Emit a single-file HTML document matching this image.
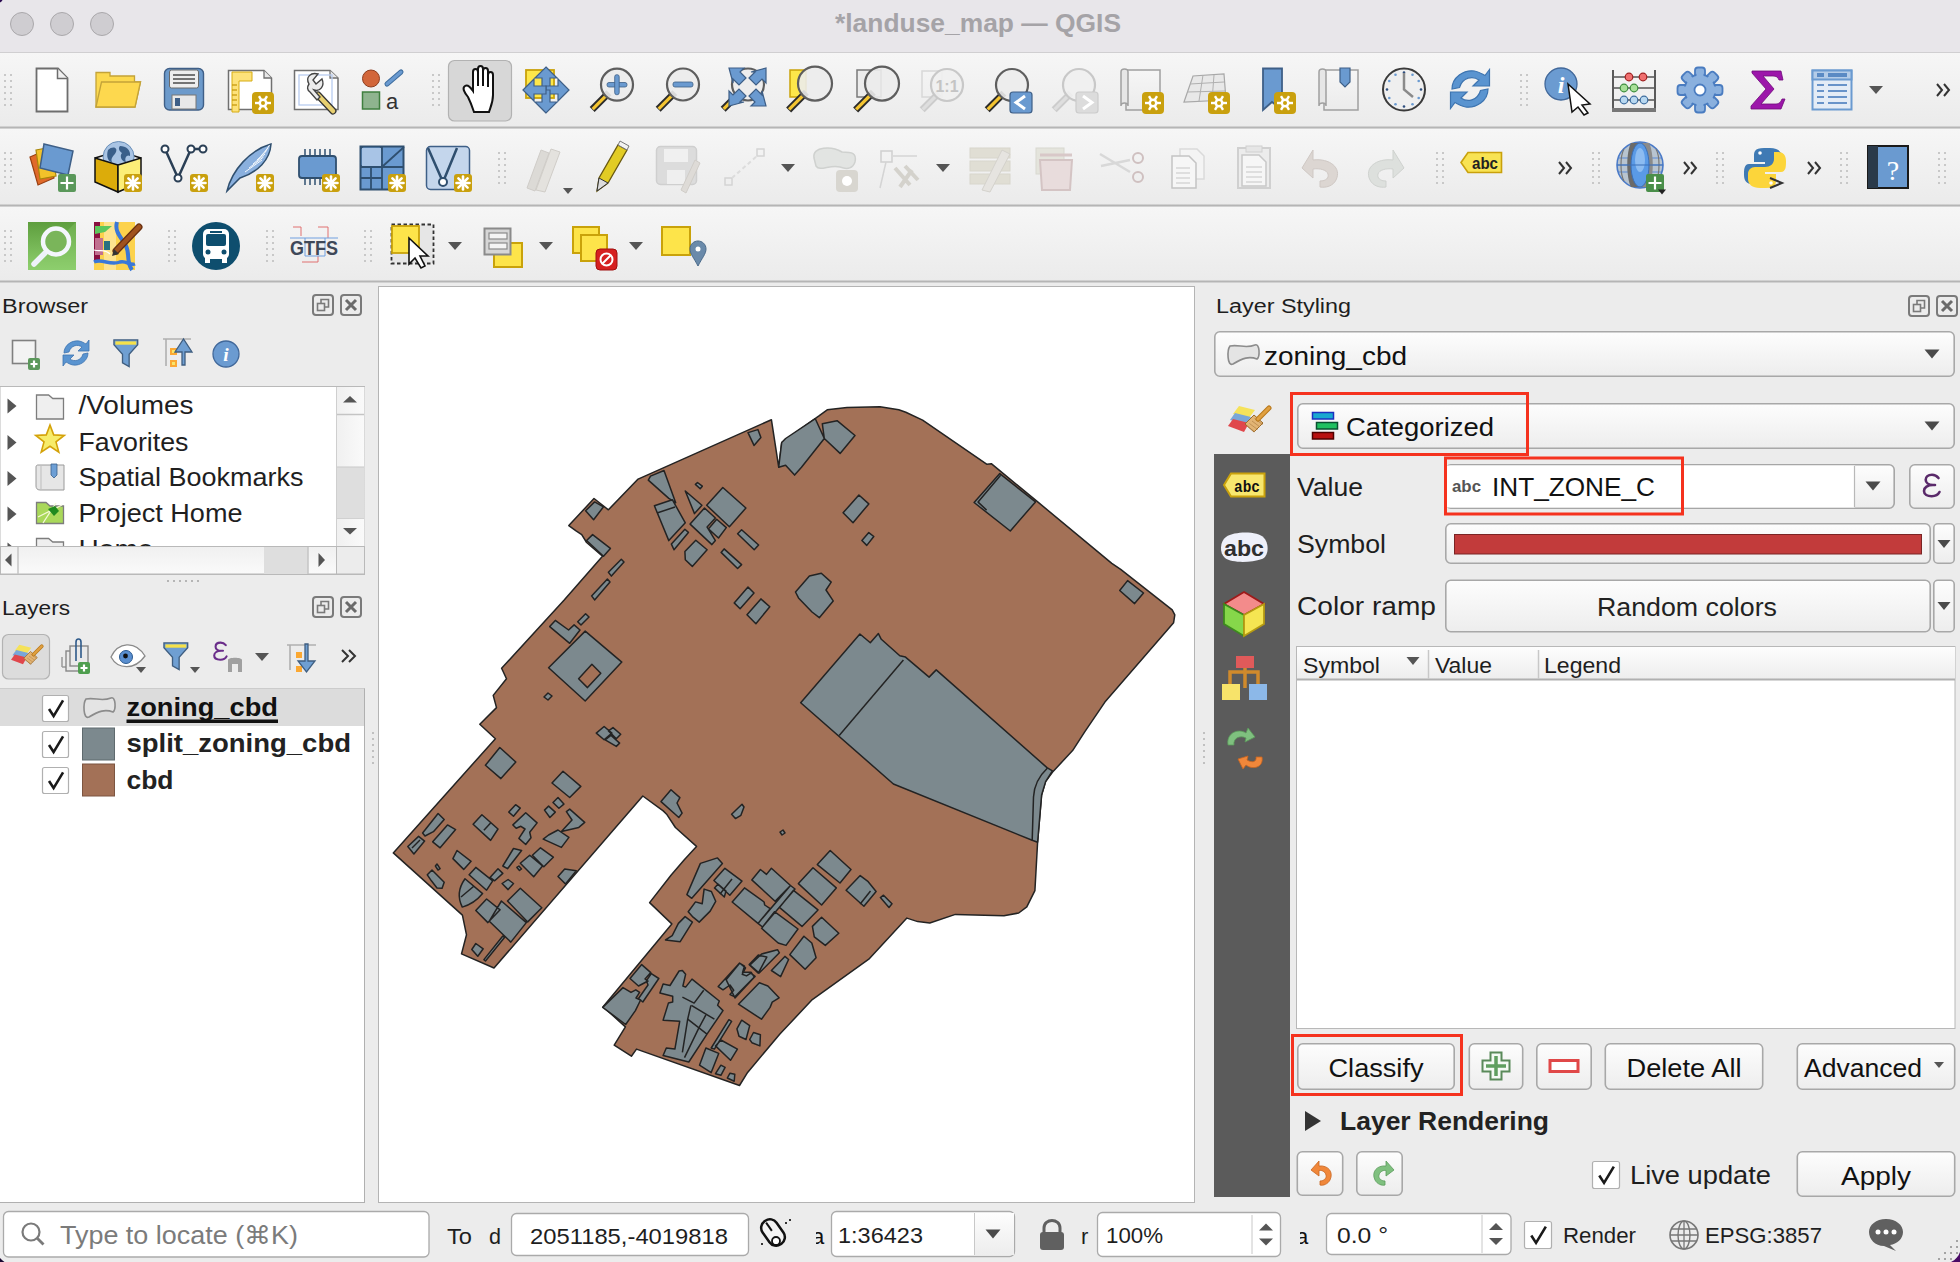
<!DOCTYPE html><html><head><meta charset="utf-8"><style>html,body{margin:0;padding:0;width:1960px;height:1262px;overflow:hidden;background:#ececec;font-family:"Liberation Sans",sans-serif}svg{display:block}</style></head><body>
<svg width="1960" height="1262" viewBox="0 0 1960 1262" style="position:absolute;left:0;top:0">
<defs>
<linearGradient id="tb" x1="0" y1="0" x2="0" y2="1"><stop offset="0" stop-color="#f6f6f6"/><stop offset="1" stop-color="#ebebeb"/></linearGradient>
<linearGradient id="btn" x1="0" y1="0" x2="0" y2="1"><stop offset="0" stop-color="#fdfdfd"/><stop offset="1" stop-color="#ededed"/></linearGradient>
<linearGradient id="sb" x1="0" y1="0" x2="1" y2="0"><stop offset="0" stop-color="#f0f0f0"/><stop offset="1" stop-color="#fafafa"/></linearGradient>
<linearGradient id="sbh" x1="0" y1="0" x2="0" y2="1"><stop offset="0" stop-color="#f0f0f0"/><stop offset="1" stop-color="#fafafa"/></linearGradient>
</defs>
<rect x="0" y="0" width="1960" height="1262" rx="0" fill="#ececec" />
<rect x="0" y="0" width="1960" height="52" rx="0" fill="#e8e6ea" />
<line x1="0" y1="52.5" x2="1960" y2="52.5" stroke="#d0cfd1" stroke-width="1" />
<circle cx="22" cy="24" r="11.5" fill="#cfcdd1" stroke="#aaa8ab" stroke-width="1"/>
<circle cx="62" cy="24" r="11.5" fill="#cfcdd1" stroke="#aaa8ab" stroke-width="1"/>
<circle cx="102" cy="24" r="11.5" fill="#cfcdd1" stroke="#aaa8ab" stroke-width="1"/>
<text x="978" y="32" font-family="Liberation Sans" font-size="26" font-weight="bold" fill="#a5a3a7" text-anchor="middle" textLength="286" lengthAdjust="spacingAndGlyphs" >*landuse_map — QGIS</text>
<rect x="0" y="53" width="1960" height="74" rx="0" fill="url(#tb)" />
<rect x="0" y="129" width="1960" height="76" rx="0" fill="url(#tb)" />
<rect x="0" y="207" width="1960" height="74" rx="0" fill="url(#tb)" />
<line x1="0" y1="127.5" x2="1960" y2="127.5" stroke="#b5b5b5" stroke-width="2" />
<line x1="0" y1="205.5" x2="1960" y2="205.5" stroke="#b5b5b5" stroke-width="2" />
<line x1="0" y1="281.5" x2="1960" y2="281.5" stroke="#b5b5b5" stroke-width="2" />
<rect x="378.5" y="286.5" width="816" height="916" rx="0" fill="#ffffff" stroke="#b4b4b4" stroke-width="1" />
<g>
<g stroke="#232323" stroke-width="1.5" stroke-linejoin="round">
<path fill="#a37157" d="M880.0 406.8 L898.8 409.8 L905.8 412.2 L922.6 420.1 L987.0 464.3 L991.3 463.7 L1036.5 500.9 L1111.8 563.3 L1120.7 569.3 L1172.2 609.9 L1174.8 614.8 L1173.6 622.7 L1104.9 702.1 L1084.7 731.8 L1072.6 750.6 L1052.4 772.2 L1045.6 781.6 L1041.6 795.0 L1037.6 842.2 L1034.9 890.7 L1026.8 906.8 L1018.7 913.0 L1003.9 915.7 L955.4 914.4 L929.8 923.0 L917.7 921.6 L906.9 918.1 L868.8 959.2 L812.3 999.6 L779.9 1034.0 L747.6 1072.4 L739.5 1085.5 L636.5 1049.1 L631.4 1056.2 L614.2 1045.1 L625.4 1026.9 L603.1 1006.7 L671.8 923.9 L649.6 902.6 L671.0 875.2 L684.3 859.7 L696.5 846.4 L675.4 827.5 L666.6 814.2 L663.2 810.9 L642.8 796.0 L494.0 968.0 L461.5 953.9 L466.5 934.8 L462.4 915.1 L393.3 852.9 L495.4 738.7 L479.8 724.3 L496.5 707.6 L493.2 695.4 L506.5 678.8 L501.6 668.3 L564.2 600.0 L602.5 556.3 L586.6 542.5 L581.7 534.6 L575.7 530.6 L568.8 525.6 L594.0 498.5 L608.4 509.8 L638.1 479.1 L771.4 419.7 L778.7 467.2 L781.7 442.5 L819.3 415.7 L827.2 409.8 L847.0 407.4Z"/>
<path fill="#7c898e" d="M800.7 702.7 L859.9 634.0 L870.3 642.8 L878.4 633.6 L881.3 639.3 L899.8 655.7 L905.5 657.1 L929.1 677.1 L936.2 669.9 L1047.0 767.6 L1052.4 770.8 L1045.6 781.6 L1041.6 795.0 L1037.6 842.2 L1032.2 840.3 L893.4 784.0ZM999.8 473.6 L1035.5 501.9 L1010.3 531.0 L974.1 502.5ZM1127.6 580.6 L1143.5 593.0 L1134.6 603.6 L1119.7 590.5ZM778.7 467.2 L781.7 442.5 L785.6 438.5 L815.3 418.7 L824.3 438.5 L801.5 467.2 L794.6 475.1 L785.6 465.2ZM822.3 423.7 L837.1 420.7 L855.0 435.5 L840.1 453.4 L824.3 438.5ZM748.0 432.6 L757.9 429.6 L760.9 437.5 L754.0 445.4ZM648.3 480.1 L650.5 476.1 L664.0 470.5 L675.7 502.7 L668.8 498.4ZM654.4 505.8 L672.3 499.7 L685.3 522.8 L668.8 540.6ZM685.3 491.0 L701.9 505.3 L694.5 513.6ZM695.4 484.4 L697.5 482.5 L702.3 486.2 L700.2 488.8ZM706.7 505.3 L722.8 487.5 L745.9 508.0 L729.4 526.7ZM690.1 524.1 L704.5 508.0 L715.4 518.0 L707.1 527.1 L715.4 540.6 L711.9 544.6ZM708.4 528.9 L716.7 519.3 L726.3 527.6 L718.5 538.0ZM671.4 544.1 L684.9 529.3 L688.4 532.4 L674.0 549.8ZM684.9 551.5 L695.8 540.2 L707.1 549.8 L692.3 566.4 L685.3 559.8ZM737.6 533.7 L741.6 529.7 L758.6 545.0 L754.2 549.8ZM721.1 552.4 L724.1 548.9 L741.6 564.6 L737.6 568.5ZM843.1 512.8 L858.9 495.0 L868.8 503.9 L853.0 522.7ZM861.9 540.5 L868.8 532.6 L873.8 536.5 L866.8 545.4ZM795.5 592.0 L809.4 576.1 L821.3 573.2 L831.2 582.1 L826.0 590.0 L833.2 600.9 L819.3 617.7 L812.0 612.0 L798.5 597.9ZM734.2 602.9 L748.0 587.0 L754.0 593.0 L740.1 608.8ZM747.0 614.8 L760.9 598.9 L769.8 606.8 L755.9 623.7ZM585.6 510.8 L594.6 501.9 L603.5 506.8 L593.6 519.7ZM586.6 540.5 L592.6 534.6 L610.4 548.4 L603.5 556.3ZM608.4 572.2 L621.3 559.3 L624.0 562.0 L611.4 576.1ZM591.6 595.9 L607.4 579.1 L610.0 582.0 L594.6 599.9ZM577.7 621.7 L585.6 613.8 L589.0 617.0 L581.0 625.0ZM548.6 667.7 L585.2 631.1 L621.8 662.1 L585.2 701.0ZM549.7 626.6 L555.3 620.4 L568.6 630.0 L574.1 624.9 L580.0 630.0 L569.7 643.3ZM485.4 765.3 L499.8 747.5 L515.8 762.0 L500.9 778.6ZM552.0 783.0 L563.0 771.3 L580.8 786.4 L569.7 797.5ZM596.3 733.1 L604.1 726.5 L611.9 733.1 L604.1 739.8ZM608.5 730.9 L613.0 727.6 L620.7 734.2 L616.3 738.7ZM605.2 739.8 L610.8 735.3 L619.6 743.1 L616.3 746.4ZM661.0 801.6 L671.0 789.8 L679.9 797.6 L677.0 803.0 L682.1 813.1 L678.8 817.5ZM731.6 814.2 L742.0 804.2 L744.0 807.0 L740.9 815.3 L735.4 818.6ZM780.0 832.0 L783.0 830.0 L785.0 833.0 L782.0 835.0ZM544.0 697.0 L548.0 693.0 L552.0 696.0 L548.0 700.0ZM407.8 846.5 L418.6 836.4 L424.6 841.1 L413.9 853.9ZM422.6 833.0 L438.1 813.5 L444.2 819.5 L433.4 831.7 L425.0 836.0ZM432.7 841.8 L447.5 824.9 L455.6 829.6 L440.1 847.8ZM473.1 824.2 L481.9 814.8 L498.0 829.0 L490.6 840.4ZM508.8 812.1 L515.6 804.7 L520.3 808.1 L513.5 816.2ZM512.9 824.9 L525.7 812.8 L537.1 822.9 L529.7 832.3 L531.0 837.7 L525.7 844.5 L518.9 838.4 L525.0 829.0 L520.9 826.3 L516.2 828.3ZM544.5 810.1 L548.6 806.1 L555.3 812.1 L549.9 817.5ZM553.0 802.5 L558.0 797.5 L563.9 804.1 L558.9 808.3ZM566.4 811.6 L569.7 809.1 L584.7 822.4 L578.8 827.4 L561.4 831.6 L572.0 820.0ZM543.2 839.1 L548.6 835.0 L558.0 830.0 L568.9 837.4 L561.4 847.4ZM452.9 858.6 L457.0 850.5 L471.1 861.3 L463.7 869.4ZM427.3 874.8 L432.0 870.0 L444.2 882.2 L442.1 888.2 L437.0 888.0 L431.4 880.8ZM435.4 866.0 L437.0 864.0 L440.1 868.7 L438.0 870.0ZM469.1 874.8 L475.8 867.4 L492.7 880.8 L486.6 890.2ZM490.0 877.4 L498.0 868.7 L502.8 873.4 L494.7 880.8ZM502.8 866.0 L513.5 848.5 L521.6 850.5 L507.5 868.7ZM520.3 863.3 L529.7 855.2 L542.5 866.0 L533.7 876.8ZM532.4 855.2 L540.5 847.8 L553.3 857.2 L543.8 866.7ZM516.9 867.4 L518.9 866.0 L521.5 869.0 L519.5 870.5ZM502.1 883.5 L508.1 879.5 L513.5 883.5 L508.1 889.6ZM507.5 901.0 L520.3 888.2 L541.8 907.8 L527.7 921.9ZM475.8 910.5 L486.6 899.0 L500.1 909.8 L487.9 922.6ZM489.3 921.2 L501.4 901.0 L526.3 922.6 L510.8 942.1ZM471.8 949.5 L475.8 943.5 L483.2 948.8 L477.8 956.3ZM483.9 959.6 L502.8 936.0 L504.5 937.5 L485.5 961.0ZM558.0 876.5 L564.7 869.0 L576.3 870.7 L565.5 884.0ZM817.3 864.6 L830.2 850.5 L851.0 869.5 L840.0 883.0ZM798.4 883.6 L813.0 867.7 L836.3 887.9 L821.6 905.0ZM732.2 902.0 L744.5 887.9 L764.1 902.0 L764.7 905.0 L770.2 908.7 L758.0 923.4ZM751.8 879.9 L760.4 869.5 L766.5 874.4 L771.4 868.3 L790.5 885.5 L775.1 901.3ZM758.0 923.4 L790.5 885.5 L795.0 889.0 L762.5 927.0ZM779.4 907.4 L793.5 890.3 L818.0 909.9 L802.0 926.4ZM761.6 928.3 L774.5 911.7 L798.0 929.0 L786.0 945.4 L778.2 943.0ZM846.1 890.3 L860.2 875.6 L868.2 881.7 L876.1 891.5 L863.9 906.2ZM880.4 897.6 L883.5 895.2 L892.0 903.8 L889.0 907.4ZM713.9 880.5 L724.9 868.3 L742.0 881.1 L729.8 895.2ZM714.5 887.9 L718.0 884.0 L726.0 891.0 L724.3 897.0ZM686.9 894.6 L700.4 863.4 L717.5 857.9 L722.4 863.4 L691.8 898.3ZM688.2 911.7 L695.5 901.9 L702.2 903.8 L704.1 889.1 L711.4 891.5 L715.7 901.3 L710.2 911.1 L699.2 922.1 L693.1 917.2ZM678.4 923.4 L685.1 916.6 L692.4 922.1 L680.2 941.7 L665.5 939.9 L672.2 935.6ZM812.4 926.4 L821.6 917.2 L838.8 933.2 L825.3 945.4 L814.3 936.8ZM789.8 954.6 L803.9 936.2 L811.8 943.0 L816.1 957.7 L805.1 969.3ZM750.0 965.0 L761.6 954.0 L777.5 949.7 L779.4 952.8 L759.2 973.0ZM771.4 970.5 L784.9 956.4 L788.6 959.5 L780.6 976.6ZM726.1 979.7 L739.6 963.2 L744.5 966.2 L742.6 972.3 L751.2 972.3 L754.3 977.2 L735.0 998.0ZM659.9 993.0 L663.1 983.9 L670.0 985.5 L679.1 971.0 L682.4 970.5 L685.6 974.3 L682.9 986.0 L685.6 987.1 L692.0 979.1 L719.3 1001.0 L717.6 1005.3 L723.0 1010.6 L707.0 1034.1 L688.8 1062.0 L663.1 1055.5 L666.3 1048.0 L674.9 1049.1 L679.7 1021.3 L663.1 1020.2 L668.4 1003.1 L672.7 1002.1 L672.7 996.2ZM602.7 1007.4 L623.0 987.6 L631.0 992.4 L635.8 989.8 L639.6 992.4 L636.0 998.0 L640.6 1000.0 L635.4 1010.6 L625.7 1024.5ZM630.0 978.5 L641.7 964.6 L650.8 972.6 L645.0 979.0 L648.0 981.0 L638.5 986.0ZM646.5 980.7 L651.3 973.7 L658.8 978.5 L642.8 1002.0 L638.5 998.5 L648.0 985.0ZM718.2 986.6 L739.6 963.0 L745.5 967.8 L742.2 974.3 L746.5 975.9 L750.8 973.2 L755.1 976.4 L734.8 996.7 L730.0 994.6 L733.7 990.3 L730.0 985.0 L723.0 989.8ZM738.5 1004.2 L759.4 982.8 L767.9 986.0 L779.1 997.8 L772.2 1002.1 L770.1 1007.4 L761.5 1019.2ZM711.2 1048.0 L728.9 1019.7 L731.6 1021.3 L714.4 1049.1ZM715.5 1045.9 L720.9 1040.0 L737.4 1049.1 L730.5 1060.3ZM699.5 1065.2 L705.9 1048.0 L718.7 1053.4 L711.2 1072.6ZM715.5 1073.7 L720.9 1065.2 L725.1 1067.3 L720.9 1075.3ZM727.3 1078.0 L730.0 1073.2 L734.8 1074.3 L734.2 1081.2ZM736.9 1028.8 L741.7 1020.2 L749.7 1025.6 L746.0 1039.5 L739.0 1036.3ZM749.7 1039.5 L753.5 1032.5 L760.4 1034.7 L759.9 1045.9 L751.9 1042.7ZM749.2 964.6 L758.3 955.0 L766.8 957.1 L758.3 973.2Z"/>
<path fill="#a37157" d="M578.6 678.8 L591.9 664.3 L600.8 673.2 L587.5 687.6Z"/>
<path fill="#7c898e" d="M465 878.8 L482.6 893.6 Q474 904 462.3 907.1 Q455 893 465 878.8 Z"/>
<path fill="none" d="M412.0 848.0 L420.0 840.0"/>
<path fill="none" d="M483.9 830.3 L490.6 822.9"/>
<path fill="none" d="M461.0 897.0 L473.8 886.2"/>
<path fill="none" d="M1000.6 475.2 L978.1 502.1 L986.6 510.1"/>
<path fill="none" d="M657.0 513.0 L675.0 507.0"/>
<path fill="none" d="M903.4 660.0 L839.2 735.5"/>
<path fill="none" d="M682.4 997.2 L694.1 1003.1 L703.7 990.3"/>
<path fill="none" d="M690.9 1005.3 L687.7 1019.2 L682.4 1052.3"/>
<path fill="none" d="M687.7 1019.2 L707.0 1034.1"/>
<path fill="none" d="M691.4 1005.3 L714.4 1019.2"/>
<path fill="none" d="M705.9 1014.9 L698.4 1028.8 L684.5 1057.7"/>
<path fill="none" d="M860.2 904.0 L870.5 891.0"/>
<path fill="none" d="M720.0 894.0 L732.0 879.0"/>
<path fill="none" d="M1032.2 840.3 L1033.5 797 C1034 787 1039 776 1047.5 768"/>
</g></g>
<text x="2" y="313" font-family="Liberation Sans" font-size="20" font-weight="normal" fill="#1e1e1e" text-anchor="start" textLength="86" lengthAdjust="spacingAndGlyphs" >Browser</text>
<rect x="313" y="295" width="20" height="20" rx="3" fill="none" stroke="#7a7a7a" stroke-width="2" />
<rect x="317.5" y="303.5" width="7" height="7" rx="0" fill="none" stroke="#7a7a7a" stroke-width="1.6" />
<path d="M321 303 V299.5 H328.5 V307 H325" fill="none" stroke="#7a7a7a" stroke-width="1.6" />
<rect x="341" y="295" width="20" height="20" rx="3" fill="none" stroke="#7a7a7a" stroke-width="2" />
<path d="M346 300 L356 310 M356 300 L346 310" fill="none" stroke="#6a6a6a" stroke-width="3" />
<rect x="12.5" y="340.5" width="23" height="23" rx="0" fill="#f3f3f3" stroke="#808080" stroke-width="1.6" />
<rect x="28" y="358" width="12" height="12" rx="2" fill="#5b985b" />
<path d="M30.5 364.0 H37.5 M34.0 360.5 V367.5" fill="none" stroke="#fff" stroke-width="2.2" />
<g transform="translate(62 339) scale(1.0)">
<path d="M2 14 C2 6 10 1 17 2 C20 2.5 22 4 24 5 L27 1 V12 H16 L20 8 C16 5 9 6 7 13 Z" fill="#5a94d0" stroke="#3d74b0" stroke-width="0.8" />
<path d="M26 14 C26 22 18 27 11 26 C8 25.5 6 24 4 23 L1 27 V16 H12 L8 20 C12 23 19 22 21 15 Z" fill="#5a94d0" stroke="#3d74b0" stroke-width="0.8" />
</g>
<g transform="translate(113 339) scale(0.95)">
<path d="M1 1 H26 V6 L17 16 V29 L10 25 V16 L1 6 Z" fill="#6f9fd2" stroke="#3f5e80" stroke-width="1.4" />
<rect x="2.5" y="2.5" width="22" height="3.5" rx="0" fill="#f5e14a" />
</g>
<path d="M163 339 H191 M166 339 V366" fill="none" stroke="#b0b0b0" stroke-width="1.6" />
<rect x="170" y="348" width="7" height="7" rx="0" fill="#fba832" />
<rect x="170" y="360" width="7" height="7" rx="0" fill="#fba832" />
<rect x="172" y="350" width="3" height="3" rx="0" fill="#f7e56a" />
<rect x="172" y="362" width="3" height="3" rx="0" fill="#f7e56a" />
<path d="M182 365 V352 H175 L183.5 339 L192 352 H185 V365 Z" fill="#6f9fd2" stroke="#3f5e80" stroke-width="1.3" />
<circle cx="226" cy="354" r="13" fill="#6b9bd1" stroke="#41689a" stroke-width="1.3"/>
<text x="226" y="361.15" font-family="Liberation Serif" font-size="19.5" font-weight="bold" fill="#ffffff" text-anchor="middle" font-style="italic">i</text>
<rect x="0" y="386.5" width="364.5" height="188" rx="0" fill="#ffffff" stroke="#b9b9b9" stroke-width="1" />
<path d="M7.5 398.5 L16.5 406 L7.5 413.5 Z" fill="#555" />
<text x="78.5" y="414" font-family="Liberation Sans" font-size="25" font-weight="normal" fill="#1f1f1f" text-anchor="start" textLength="115" lengthAdjust="spacingAndGlyphs" >/Volumes</text>
<path d="M7.5 435.1 L16.5 442.6 L7.5 450.1 Z" fill="#555" />
<text x="78.5" y="450.6" font-family="Liberation Sans" font-size="25" font-weight="normal" fill="#1f1f1f" text-anchor="start" textLength="110" lengthAdjust="spacingAndGlyphs" >Favorites</text>
<path d="M7.5 470.9 L16.5 478.4 L7.5 485.9 Z" fill="#555" />
<text x="78.5" y="486.4" font-family="Liberation Sans" font-size="25" font-weight="normal" fill="#1f1f1f" text-anchor="start" textLength="225" lengthAdjust="spacingAndGlyphs" >Spatial Bookmarks</text>
<path d="M7.5 506.6 L16.5 514.1 L7.5 521.6 Z" fill="#555" />
<text x="78.5" y="522.1" font-family="Liberation Sans" font-size="25" font-weight="normal" fill="#1f1f1f" text-anchor="start" textLength="164" lengthAdjust="spacingAndGlyphs" >Project Home</text>
<path d="M36.5 419.0 V395.0 H48.6 L52.8 398.5 H63.5 V419.0 Z" fill="#efefef" stroke="#7d7d7d" stroke-width="1.3" />
<path d="M50.0 425.0 L53.7 434.9 L64.3 435.4 L56.0 441.9 L58.8 452.1 L50.0 446.3 L41.2 452.1 L44.0 441.9 L35.7 435.4 L46.3 434.9Z" fill="#f7ec6a" stroke="#d4a20a" stroke-width="1.6" />
<path d="M38 465 H64 V490 H40 C37 490 36 488 36 486 V467 C36 465.5 37 465 38 465 Z" fill="#e6e6e6" stroke="#9a9a9a" stroke-width="1" />
<path d="M41 466 V489" fill="none" stroke="#bdbdbd" stroke-width="1" />
<path d="M51 464 H57 V475 L54 478 L51 475 Z" fill="#6d9fd5" stroke="#3a5f8c" stroke-width="0.8" />
<path d="M36.5 523.5 V502.5 H46 L50 506 H63.5 V523.5 Z" fill="#a9d85a" stroke="#7d7d7d" stroke-width="1.3" />
<path d="M38 517 L62 505 M43 523 L56 503" fill="none" stroke="#f4f8d8" stroke-width="1.3" />
<path d="M48 509 L55 506 L59 511 L54 516 Z" fill="#1f8a1f" />
<clipPath id="trclip"><rect x="0" y="387" width="336" height="159"/></clipPath>
<g clip-path="url(#trclip)">
<path d="M7.5 542.5 L16.5 550 L7.5 557.5 Z" fill="#555" />
<path d="M36.5 562.5 V538.5 H48.6 L52.8 542 H63.5 V562.5 Z" fill="#efefef" stroke="#7d7d7d" stroke-width="1.3" />
<text x="78.5" y="558" font-family="Liberation Sans" font-size="25" font-weight="normal" fill="#1f1f1f" text-anchor="start" textLength="75" lengthAdjust="spacingAndGlyphs" >Home</text>
</g>
<rect x="336.5" y="387" width="28" height="159" rx="0" fill="url(#sb)" />
<line x1="336.5" y1="387" x2="336.5" y2="546" stroke="#cfcfcf" stroke-width="1" />
<line x1="337" y1="414.5" x2="364" y2="414.5" stroke="#c4c4c4" stroke-width="1.5" />
<line x1="337" y1="518" x2="364" y2="518" stroke="#c4c4c4" stroke-width="1.5" />
<rect x="337" y="467" width="27" height="51" rx="0" fill="#dedede" />
<line x1="337" y1="467" x2="364" y2="467" stroke="#c9c9c9" stroke-width="1" />
<path d="M343 402.5 L350 396 L357 402.5 Z" fill="#555" />
<path d="M343 528 L357 528 L350 534.5 Z" fill="#555" />
<rect x="0.5" y="546.5" width="336" height="27.5" rx="0" fill="url(#sbh)" stroke="#b9b9b9" stroke-width="1" />
<line x1="18" y1="547" x2="18" y2="574" stroke="#c4c4c4" stroke-width="1.5" />
<rect x="264" y="547" width="44" height="27" rx="0" fill="#dedede" />
<line x1="308" y1="547" x2="308" y2="574" stroke="#c4c4c4" stroke-width="1.5" />
<path d="M5 560 L11.5 553.5 V566.5 Z" fill="#555" />
<path d="M318.5 553 L325 560 L318.5 567 Z" fill="#555" />
<rect x="336.5" y="546.5" width="28" height="27.5" rx="0" fill="#ececec" stroke="#b9b9b9" stroke-width="1" />
<rect x="167" y="580" width="2" height="2" rx="0" fill="#b5b5b5" />
<rect x="173" y="580" width="2" height="2" rx="0" fill="#b5b5b5" />
<rect x="179" y="580" width="2" height="2" rx="0" fill="#b5b5b5" />
<rect x="185" y="580" width="2" height="2" rx="0" fill="#b5b5b5" />
<rect x="191" y="580" width="2" height="2" rx="0" fill="#b5b5b5" />
<rect x="197" y="580" width="2" height="2" rx="0" fill="#b5b5b5" />
<text x="2" y="614.7" font-family="Liberation Sans" font-size="20" font-weight="normal" fill="#1e1e1e" text-anchor="start" textLength="68" lengthAdjust="spacingAndGlyphs" >Layers</text>
<rect x="313" y="597" width="20" height="20" rx="3" fill="none" stroke="#7a7a7a" stroke-width="2" />
<rect x="317.5" y="605.5" width="7" height="7" rx="0" fill="none" stroke="#7a7a7a" stroke-width="1.6" />
<path d="M321 605 V601.5 H328.5 V609 H325" fill="none" stroke="#7a7a7a" stroke-width="1.6" />
<rect x="341" y="597" width="20" height="20" rx="3" fill="none" stroke="#7a7a7a" stroke-width="2" />
<path d="M346 602 L356 612 M356 602 L346 612" fill="none" stroke="#6a6a6a" stroke-width="3" />
<rect x="2.5" y="634.5" width="47" height="44.5" rx="6" fill="#dcdcdc" stroke="#b3b3b3" stroke-width="1.2" />
<g transform="translate(11 644) scale(0.75)">
<path d="M5 9 L11 1 L27 5 L21 13 Z" fill="#f5e25a" />
<path d="M2 15 L7 8 L23 12 L18 19 Z" fill="#79a6d8" />
<path d="M0 21 L5 14 L21 18 L16 27 Z" fill="#e0474c" />
<path d="M17 19 L26 10 L35 18 L26 27 Z" fill="#e2b474" stroke="#9a6a2a" stroke-width="1" />
<line x1="19.0" y1="21.0" x2="27.0" y2="27.0" stroke="#b8864a" stroke-width="0.8" />
<line x1="21.5" y1="18.5" x2="29.5" y2="24.5" stroke="#b8864a" stroke-width="0.8" />
<line x1="24.0" y1="16.0" x2="32.0" y2="22.0" stroke="#b8864a" stroke-width="0.8" />
<line x1="26.5" y1="13.5" x2="34.5" y2="19.5" stroke="#b8864a" stroke-width="0.8" />
<path d="M30 14 L41 3" fill="none" stroke="#b8781c" stroke-width="5" stroke-linecap="round"/>
<path d="M30 14 L41 3" fill="none" stroke="#e0a040" stroke-width="3" stroke-linecap="round"/>
</g>
<path d="M62 667 V657 M62 667 H74" fill="none" stroke="#999" stroke-width="1.5" />
<rect x="66" y="651" width="20" height="20" rx="0" fill="#eaeaea" stroke="#888" stroke-width="1.4" />
<rect x="70" y="646" width="18" height="20" rx="0" fill="#eaeaea" stroke="#888" stroke-width="1.4" />
<path d="M76 661 V642 C76 638 81 638 81 642 V658" fill="none" stroke="#2f5a8a" stroke-width="1.6" />
<rect x="78" y="662" width="12" height="12" rx="2" fill="#4e9e4e" />
<path d="M80.5 668.0 H87.5 M84.0 664.5 V671.5" fill="none" stroke="#fff" stroke-width="2.2" />
<path d="M111 657 C118 642 135 640 145 656 C135 670 118 670 111 657 Z" fill="#ffffff" stroke="#8a8a8a" stroke-width="1.3" />
<circle cx="126" cy="657" r="6.5" fill="#5a8fd0" stroke="#2b5a90" stroke-width="1"/>
<circle cx="125.5" cy="656" r="2.4" fill="#111"/>
<path d="M136.0 667.0 L146.0 667.0 L141 673.0 Z" fill="#555" />
<g transform="translate(163 642) scale(0.95)">
<path d="M1 1 H26 V6 L17 16 V29 L10 25 V16 L1 6 Z" fill="#6f9fd2" stroke="#3f5e80" stroke-width="1.4" />
<rect x="2.5" y="2.5" width="22" height="3.5" rx="0" fill="#f5e14a" />
</g>
<path d="M190.0 667.0 L200.0 667.0 L195 673.0 Z" fill="#555" />
<g transform="translate(213 642) scale(0.8)">
<path d="M16 4 C14 1.5 11.5 0.8 9.5 0.8 C5.5 0.8 3.2 3 3.2 5.8 C3.2 8.8 6 11 10.5 11 H12.5 M10.5 11 C5.2 11 1.5 13.5 1.5 17 C1.5 20.5 5 22.2 9.2 22.2 C12.5 22.2 15.5 21 17 18" fill="none" stroke="#6a2d8a" stroke-width="2.6" stroke-linecap="round"/>
</g>
<path d="M228 672 V660 C228 657 242 657 242 660 V672 H238 V664 H232 V672 Z" fill="#a0a0a0" />
<path d="M255.0 653.0 L269.0 653.0 L262 661.0 Z" fill="#555" />
<path d="M287 645 H316 M290 645 V670" fill="none" stroke="#b0b0b0" stroke-width="1.6" />
<rect x="296" y="652" width="6" height="6" rx="0" fill="#fba832" />
<rect x="296" y="666" width="6" height="6" rx="0" fill="#fba832" />
<path d="M305 644 V661 H298 L306.5 672 L315 661 H308 V644 Z" fill="#6f9fd2" stroke="#3f5e80" stroke-width="1.3" />
<path d="M342 650 L348 656 L342 662 M349 650 L355 656 L349 662" fill="none" stroke="#333" stroke-width="2" />
<rect x="0" y="688" width="364.5" height="515" rx="0" fill="#ffffff" />
<line x1="364.5" y1="688" x2="364.5" y2="1203" stroke="#b0b0b0" stroke-width="1" />
<line x1="0" y1="1202.5" x2="365" y2="1202.5" stroke="#b0b0b0" stroke-width="1" />
<line x1="0" y1="688.5" x2="364.5" y2="688.5" stroke="#cccccc" stroke-width="1" />
<rect x="0" y="689" width="364" height="37" rx="0" fill="#dcdcdc" />
<rect x="42.5" y="695.5" width="26" height="26" rx="2" fill="#ffffff" stroke="#b0b0b0" stroke-width="1.2" />
<path d="M49.02 709.04 L53.61 716.06 L63.06 700.4" fill="none" stroke="#1a1a1a" stroke-width="2.6" />
<rect x="42.5" y="731.5" width="26" height="26" rx="2" fill="#ffffff" stroke="#b0b0b0" stroke-width="1.2" />
<path d="M49.02 745.04 L53.61 752.06 L63.06 736.4" fill="none" stroke="#1a1a1a" stroke-width="2.6" />
<rect x="42.5" y="767.5" width="26" height="26" rx="2" fill="#ffffff" stroke="#b0b0b0" stroke-width="1.2" />
<path d="M49.02 781.04 L53.61 788.06 L63.06 772.4" fill="none" stroke="#1a1a1a" stroke-width="2.6" />
<path d="M86 699 C95 697 101 702 111 698 C116 696 116 710 113 712 C105 709 99 711 89 717 C83 720 83 703 86 699 Z" fill="#e4e4e4" stroke="#8c8c8c" stroke-width="1.6" />
<rect x="82.5" y="728" width="32" height="32" rx="0" fill="#7c898e" stroke="#5f6a6e" stroke-width="1" />
<rect x="82.5" y="764" width="32" height="32" rx="0" fill="#a37157" stroke="#7d5540" stroke-width="1" />
<text x="126.5" y="716" font-family="Liberation Sans" font-size="25" font-weight="bold" fill="#111" text-anchor="start" textLength="151.5" lengthAdjust="spacingAndGlyphs" >zoning_cbd</text>
<rect x="126.5" y="719.5" width="151.5" height="3.5" rx="0" fill="#111" />
<text x="126.5" y="752" font-family="Liberation Sans" font-size="25" font-weight="bold" fill="#222" text-anchor="start" textLength="224.5" lengthAdjust="spacingAndGlyphs" >split_zoning_cbd</text>
<text x="126.5" y="788.7" font-family="Liberation Sans" font-size="25" font-weight="bold" fill="#222" text-anchor="start" textLength="47" lengthAdjust="spacingAndGlyphs" >cbd</text>
<rect x="372" y="732" width="2" height="2" rx="0" fill="#c0c0c0" />
<rect x="372" y="738" width="2" height="2" rx="0" fill="#c0c0c0" />
<rect x="372" y="744" width="2" height="2" rx="0" fill="#c0c0c0" />
<rect x="372" y="750" width="2" height="2" rx="0" fill="#c0c0c0" />
<rect x="372" y="756" width="2" height="2" rx="0" fill="#c0c0c0" />
<rect x="372" y="762" width="2" height="2" rx="0" fill="#c0c0c0" />
<text x="1216" y="313" font-family="Liberation Sans" font-size="20" font-weight="normal" fill="#1e1e1e" text-anchor="start" textLength="135" lengthAdjust="spacingAndGlyphs" >Layer Styling</text>
<rect x="1909" y="296" width="20" height="20" rx="3" fill="none" stroke="#7a7a7a" stroke-width="2" />
<rect x="1913.5" y="304.5" width="7" height="7" rx="0" fill="none" stroke="#7a7a7a" stroke-width="1.6" />
<path d="M1917 304 V300.5 H1924.5 V308 H1921" fill="none" stroke="#7a7a7a" stroke-width="1.6" />
<rect x="1937" y="296" width="20" height="20" rx="3" fill="none" stroke="#7a7a7a" stroke-width="2" />
<path d="M1942 301 L1952 311 M1952 301 L1942 311" fill="none" stroke="#6a6a6a" stroke-width="3" />
<rect x="1214.8" y="331.8" width="739.4" height="44.4" rx="5" fill="url(#btn)" stroke="#a8a8a8" stroke-width="1.6" />
<path d="M1230 346 C1239 344 1245 349 1255 345 C1260 343 1260 357 1257 359 C1249 356 1243 358 1233 364 C1227 367 1227 350 1230 346 Z" fill="#e4e4e4" stroke="#8c8c8c" stroke-width="1.6" />
<text x="1264" y="365" font-family="Liberation Sans" font-size="25" font-weight="normal" fill="#111" text-anchor="start" textLength="143" lengthAdjust="spacingAndGlyphs" >zoning_cbd</text>
<path d="M1924.5 349.5 L1939.5 349.5 L1932 358.5 Z" fill="#4a4a4a" />
<rect x="1214" y="454" width="76" height="743" rx="0" fill="#5b5b5b" />
<g transform="translate(1228 405) scale(1.0)">
<path d="M5 9 L11 1 L27 5 L21 13 Z" fill="#f5e25a" />
<path d="M2 15 L7 8 L23 12 L18 19 Z" fill="#79a6d8" />
<path d="M0 21 L5 14 L21 18 L16 27 Z" fill="#e0474c" />
<path d="M17 19 L26 10 L35 18 L26 27 Z" fill="#e2b474" stroke="#9a6a2a" stroke-width="1" />
<line x1="19.0" y1="21.0" x2="27.0" y2="27.0" stroke="#b8864a" stroke-width="0.8" />
<line x1="21.5" y1="18.5" x2="29.5" y2="24.5" stroke="#b8864a" stroke-width="0.8" />
<line x1="24.0" y1="16.0" x2="32.0" y2="22.0" stroke="#b8864a" stroke-width="0.8" />
<line x1="26.5" y1="13.5" x2="34.5" y2="19.5" stroke="#b8864a" stroke-width="0.8" />
<path d="M30 14 L41 3" fill="none" stroke="#b8781c" stroke-width="5" stroke-linecap="round"/>
<path d="M30 14 L41 3" fill="none" stroke="#e0a040" stroke-width="3" stroke-linecap="round"/>
</g>
<path d="M1224 485 L1231 473.5 H1264.5 V496.5 H1231 Z" fill="#f8e76e" stroke="#c9a10c" stroke-width="2" />
<text x="1247" y="492" font-family="Liberation Mono" font-size="16" font-weight="bold" fill="#111" text-anchor="middle" textLength="26" lengthAdjust="spacingAndGlyphs" >abc</text>
<path d="M1226 537 C1235 531 1258 531 1264 538 C1270 545 1268 557 1262 559 C1250 563 1232 563 1225 558 C1219 553 1220 541 1226 537 Z" fill="#eef0fa" />
<text x="1244" y="556" font-family="Liberation Sans" font-size="22" font-weight="bold" fill="#2e2e2e" text-anchor="middle" textLength="40" lengthAdjust="spacingAndGlyphs" >abc</text>
<path d="M1244 592 L1264 604 L1244 615 L1224 604 Z" fill="#f38b8b" stroke="#9e1a1a" stroke-width="1.8" />
<path d="M1224 604 L1244 615 V636 L1224 624 Z" fill="#86d74a" stroke="#3d8a1e" stroke-width="1.8" />
<path d="M1264 604 L1244 615 V636 L1264 624 Z" fill="#f5e552" stroke="#b59a12" stroke-width="1.8" />
<rect x="1236" y="656" width="18" height="12" rx="0" fill="#e05a5a" />
<rect x="1222" y="684" width="18" height="16" rx="0" fill="#f7e36a" />
<rect x="1249" y="684" width="18" height="16" rx="0" fill="#8cb8e8" />
<path d="M1245 668 V688 M1230 684 V672 H1258 V684" fill="none" stroke="#d08a2c" stroke-width="3.5" />
<path d="M1228 745 C1226 733 1238 728 1246 733 L1248 728 L1255 737 L1245 742 L1246 738 C1240 735 1233 738 1234 745 Z" fill="#7fc07f" stroke="#5a9a5a" stroke-width="0.8" />
<path d="M1262 757 C1264 768 1252 770 1246 765 L1243 769 L1238 759 L1248 756 L1247 760 C1252 763 1257 762 1256 757 Z" fill="#f0873a" stroke="#c86420" stroke-width="0.8" />
<rect x="1297.8" y="403.8" width="656.4" height="44.4" rx="5" fill="url(#btn)" stroke="#a8a8a8" stroke-width="1.6" />
<rect x="1312.5" y="412.5" width="21" height="6.5" rx="0" fill="#18a8d0" stroke="#1a30c0" stroke-width="1.5" />
<rect x="1316.5" y="422.5" width="21" height="6.5" rx="0" fill="#20c060" stroke="#0a5030" stroke-width="1.5" />
<rect x="1312.5" y="432.5" width="21" height="6.5" rx="0" fill="#b81010" stroke="#500000" stroke-width="1.5" />
<text x="1346" y="436" font-family="Liberation Sans" font-size="25" font-weight="normal" fill="#111" text-anchor="start" textLength="148" lengthAdjust="spacingAndGlyphs" >Categorized</text>
<path d="M1924.5 421.5 L1939.5 421.5 L1932 430.5 Z" fill="#4a4a4a" />
<rect x="1291.5" y="393.5" width="236" height="61" rx="0" fill="none" stroke="#f5321e" stroke-width="3" />
<text x="1297" y="495.5" font-family="Liberation Sans" font-size="25" font-weight="normal" fill="#1e1e1e" text-anchor="start" textLength="66" lengthAdjust="spacingAndGlyphs" >Value</text>
<rect x="1445.8" y="464.8" width="448.4" height="43.4" rx="5" fill="url(#btn)" stroke="#a6a6a6" stroke-width="1.6" />
<rect x="1446.5" y="465.5" width="408" height="42" rx="0" fill="#ffffff" />
<line x1="1854.5" y1="466" x2="1854.5" y2="507" stroke="#b8b8b8" stroke-width="1.2" />
<path d="M1865.5 481.5 L1880.5 481.5 L1873 490.5 Z" fill="#4a4a4a" />
<text x="1452" y="492" font-family="Liberation Sans" font-size="16" font-weight="bold" fill="#555" text-anchor="start" textLength="29" lengthAdjust="spacingAndGlyphs" >abc</text>
<text x="1492" y="496" font-family="Liberation Sans" font-size="25" font-weight="normal" fill="#111" text-anchor="start" textLength="163" lengthAdjust="spacingAndGlyphs" >INT_ZONE_C</text>
<rect x="1445.5" y="458" width="237" height="56" rx="0" fill="none" stroke="#f5321e" stroke-width="3" />
<rect x="1909.8" y="464.8" width="44.4" height="43.4" rx="5" fill="url(#btn)" stroke="#a8a8a8" stroke-width="1.6" />
<g transform="translate(1922.5 474) scale(1.0)">
<path d="M16 4 C14 1.5 11.5 0.8 9.5 0.8 C5.5 0.8 3.2 3 3.2 5.8 C3.2 8.8 6 11 10.5 11 H12.5 M10.5 11 C5.2 11 1.5 13.5 1.5 17 C1.5 20.5 5 22.2 9.2 22.2 C12.5 22.2 15.5 21 17 18" fill="none" stroke="#5a2a6a" stroke-width="2.6" stroke-linecap="round"/>
</g>
<text x="1297" y="552.8" font-family="Liberation Sans" font-size="25" font-weight="normal" fill="#1e1e1e" text-anchor="start" textLength="89" lengthAdjust="spacingAndGlyphs" >Symbol</text>
<rect x="1445.8" y="523.8" width="484.4" height="39.4" rx="5" fill="url(#btn)" stroke="#a8a8a8" stroke-width="1.6" />
<rect x="1454.5" y="534.5" width="467" height="19.5" rx="0" fill="#c23b3b" stroke="#7a2424" stroke-width="1" />
<rect x="1933.8" y="523.8" width="20.4" height="39.4" rx="4" fill="url(#btn)" stroke="#a8a8a8" stroke-width="1.6" />
<path d="M1937.5 540.0 L1950.5 540.0 L1944 548.0 Z" fill="#4a4a4a" />
<text x="1297" y="615.2" font-family="Liberation Sans" font-size="25" font-weight="normal" fill="#1e1e1e" text-anchor="start" textLength="139" lengthAdjust="spacingAndGlyphs" >Color ramp</text>
<rect x="1445.8" y="580.3" width="484.4" height="51.4" rx="5" fill="url(#btn)" stroke="#a8a8a8" stroke-width="1.6" />
<text x="1687" y="616" font-family="Liberation Sans" font-size="25" font-weight="normal" fill="#222" text-anchor="middle" textLength="180" lengthAdjust="spacingAndGlyphs" >Random colors</text>
<rect x="1933.8" y="580.3" width="20.4" height="51.4" rx="4" fill="url(#btn)" stroke="#a8a8a8" stroke-width="1.6" />
<path d="M1937.5 602.0 L1950.5 602.0 L1944 610.0 Z" fill="#4a4a4a" />
<rect x="1296.5" y="646.5" width="658.5" height="382" rx="0" fill="#ffffff" stroke="#b8b8b8" stroke-width="1" />
<rect x="1297" y="647" width="658" height="32" rx="0" fill="url(#btn)" />
<line x1="1297" y1="679.5" x2="1955" y2="679.5" stroke="#b0b0b0" stroke-width="2" />
<line x1="1428.5" y1="650" x2="1428.5" y2="679" stroke="#c8c8c8" stroke-width="1.5" />
<line x1="1538.5" y1="650" x2="1538.5" y2="679" stroke="#c8c8c8" stroke-width="1.5" />
<text x="1303" y="672.5" font-family="Liberation Sans" font-size="21.5" font-weight="normal" fill="#1e1e1e" text-anchor="start" textLength="77" lengthAdjust="spacingAndGlyphs" >Symbol</text>
<path d="M1406.5 657.0 L1419.5 657.0 L1413 665.0 Z" fill="#555" />
<text x="1435" y="672.5" font-family="Liberation Sans" font-size="21.5" font-weight="normal" fill="#1e1e1e" text-anchor="start" textLength="57" lengthAdjust="spacingAndGlyphs" >Value</text>
<text x="1544" y="672.5" font-family="Liberation Sans" font-size="21.5" font-weight="normal" fill="#1e1e1e" text-anchor="start" textLength="77" lengthAdjust="spacingAndGlyphs" >Legend</text>
<rect x="1297.8" y="1043.8" width="156.4" height="45.4" rx="5" fill="url(#btn)" stroke="#a8a8a8" stroke-width="1.6" />
<text x="1376" y="1077" font-family="Liberation Sans" font-size="25" font-weight="normal" fill="#111" text-anchor="middle" textLength="95" lengthAdjust="spacingAndGlyphs" >Classify</text>
<rect x="1292.5" y="1035.5" width="169" height="59" rx="0" fill="none" stroke="#f5321e" stroke-width="3" />
<rect x="1469.3" y="1043.8" width="53.4" height="45.4" rx="5" fill="url(#btn)" stroke="#a8a8a8" stroke-width="1.6" />
<path d="M1490.5 1052.5 H1501.5 V1060.5 H1509.5 V1071.5 H1501.5 V1079.5 H1490.5 V1071.5 H1482.5 V1060.5 H1490.5 Z" fill="#f4faf4" stroke="#5a8a5a" stroke-width="2" />
<path d="M1496 1056 V1076 M1486 1066 H1506" fill="none" stroke="#5f9f5f" stroke-width="3.5" />
<rect x="1536.8" y="1043.8" width="54.4" height="45.4" rx="5" fill="url(#btn)" stroke="#a8a8a8" stroke-width="1.6" />
<rect x="1550" y="1060.5" width="28" height="11" rx="0" fill="#ffffff" stroke="#e04848" stroke-width="3" />
<rect x="1605.3" y="1043.8" width="157.4" height="45.4" rx="5" fill="url(#btn)" stroke="#a8a8a8" stroke-width="1.6" />
<text x="1684" y="1077" font-family="Liberation Sans" font-size="25" font-weight="normal" fill="#111" text-anchor="middle" textLength="115" lengthAdjust="spacingAndGlyphs" >Delete All</text>
<rect x="1797.3" y="1043.8" width="157.4" height="45.4" rx="5" fill="url(#btn)" stroke="#a8a8a8" stroke-width="1.6" />
<text x="1863" y="1077" font-family="Liberation Sans" font-size="25" font-weight="normal" fill="#111" text-anchor="middle" textLength="118" lengthAdjust="spacingAndGlyphs" >Advanced</text>
<path d="M1934.0 1062.0 L1944.0 1062.0 L1939 1068.0 Z" fill="#555" />
<path d="M1305 1111 L1321 1121 L1305 1131 Z" fill="#333" />
<text x="1340" y="1130" font-family="Liberation Sans" font-size="25" font-weight="bold" fill="#222" text-anchor="start" textLength="209" lengthAdjust="spacingAndGlyphs" >Layer Rendering</text>
<rect x="1297.3" y="1151.8" width="45.4" height="43.4" rx="5" fill="url(#btn)" stroke="#a8a8a8" stroke-width="1.6" />
<path d="M1311 1170 L1319 1161 V1166 C1328 1165 1334 1172 1330 1180 C1328 1184 1323 1186 1320 1185 L1320 1181 C1324 1181 1327 1178 1326 1175 C1325 1171 1321 1170 1319 1170.5 V1176 Z" fill="#f0873a" stroke="#c86420" stroke-width="0.8" />
<rect x="1356.8" y="1151.8" width="45.4" height="43.4" rx="5" fill="url(#btn)" stroke="#a8a8a8" stroke-width="1.6" />
<path d="M1394 1170 L1386 1161 V1166 C1377 1165 1371 1172 1375 1180 C1377 1184 1382 1186 1385 1185 L1385 1181 C1381 1181 1378 1178 1379 1175 C1380 1171 1384 1170 1386 1170.5 V1176 Z" fill="#7fc07f" stroke="#5a9a5a" stroke-width="0.8" />
<rect x="1592.5" y="1161.5" width="27" height="27" rx="2" fill="#ffffff" stroke="#b0b0b0" stroke-width="1.2" />
<path d="M1599.28 1175.56 L1604.04 1182.84 L1613.84 1166.6" fill="none" stroke="#1a1a1a" stroke-width="2.6" />
<text x="1630" y="1184" font-family="Liberation Sans" font-size="25" font-weight="normal" fill="#1e1e1e" text-anchor="start" textLength="141" lengthAdjust="spacingAndGlyphs" >Live update</text>
<rect x="1797.3" y="1151.8" width="157.4" height="44.4" rx="5" fill="url(#btn)" stroke="#a8a8a8" stroke-width="1.6" />
<text x="1876" y="1185" font-family="Liberation Sans" font-size="25" font-weight="normal" fill="#111" text-anchor="middle" textLength="70" lengthAdjust="spacingAndGlyphs" >Apply</text>
<rect x="1203" y="732" width="2" height="2" rx="0" fill="#c0c0c0" />
<rect x="1203" y="738" width="2" height="2" rx="0" fill="#c0c0c0" />
<rect x="1203" y="744" width="2" height="2" rx="0" fill="#c0c0c0" />
<rect x="1203" y="750" width="2" height="2" rx="0" fill="#c0c0c0" />
<rect x="1203" y="756" width="2" height="2" rx="0" fill="#c0c0c0" />
<rect x="1203" y="762" width="2" height="2" rx="0" fill="#c0c0c0" />
<rect x="3.5" y="1211.5" width="425.5" height="45.5" rx="5" fill="#ffffff" stroke="#aaaaaa" stroke-width="1.3" />
<circle cx="31" cy="1232" r="8.5" fill="none" stroke="#7a7a7a" stroke-width="2.2"/>
<line x1="37" y1="1238" x2="43.5" y2="1244.5" stroke="#7a7a7a" stroke-width="2.8" />
<text x="60" y="1244" font-family="Liberation Sans" font-size="25" font-weight="normal" fill="#7b7b7b" text-anchor="start" textLength="238" lengthAdjust="spacingAndGlyphs" >Type to locate (⌘K)</text>
<text x="447" y="1244" font-family="Liberation Sans" font-size="22" font-weight="normal" fill="#1e1e1e" text-anchor="start" textLength="25" lengthAdjust="spacingAndGlyphs" >To</text>
<text x="489" y="1244" font-family="Liberation Sans" font-size="22" font-weight="normal" fill="#1e1e1e" text-anchor="start" textLength="12" lengthAdjust="spacingAndGlyphs" >d</text>
<rect x="511.5" y="1213.5" width="237" height="42" rx="5" fill="#ffffff" stroke="#aaaaaa" stroke-width="1.3" />
<text x="530" y="1244" font-family="Liberation Sans" font-size="22" font-weight="normal" fill="#1e1e1e" text-anchor="start" textLength="198" lengthAdjust="spacingAndGlyphs" >2051185,-4019818</text>
<g transform="rotate(-35 774 1233)">
<rect x="765" y="1218" width="17" height="28" rx="8" fill="#f3f3f3" stroke="#111" stroke-width="2.5" />
<line x1="773.5" y1="1220" x2="773.5" y2="1230" stroke="#111" stroke-width="2" />
</g>
<circle cx="776" cy="1241" r="4" fill="#fff" stroke="#111" stroke-width="1.8"/>
<rect x="785" y="1222" width="2" height="2" rx="0" fill="#333" />
<rect x="789" y="1219" width="2" height="2" rx="0" fill="#333" />
<rect x="761" y="1243" width="2" height="2" rx="0" fill="#333" />
<clipPath id="ca1"><rect x="816" y="1215" width="10" height="40"/></clipPath>
<g clip-path="url(#ca1)">
<text x="812" y="1244" font-family="Liberation Sans" font-size="22" font-weight="normal" fill="#111" text-anchor="start" >a</text>
</g>
<rect x="831.5" y="1211.5" width="183" height="45" rx="5" fill="#ffffff" stroke="#aaaaaa" stroke-width="1.3" />
<rect x="975" y="1213" width="39" height="42" rx="0" fill="url(#btn)" />
<line x1="974.5" y1="1213" x2="974.5" y2="1255" stroke="#c8c8c8" stroke-width="1" />
<path d="M985.5 1229.5 L1000.5 1229.5 L993 1238.5 Z" fill="#4a4a4a" />
<text x="838" y="1243" font-family="Liberation Sans" font-size="22" font-weight="normal" fill="#1e1e1e" text-anchor="start" textLength="85" lengthAdjust="spacingAndGlyphs" >1:36423</text>
<path d="M1044 1233 V1228 C1044 1218 1060 1218 1060 1228 V1233" fill="none" stroke="#606060" stroke-width="3" />
<rect x="1040" y="1232" width="24" height="18" rx="3" fill="#606060" />
<text x="1081" y="1244" font-family="Liberation Sans" font-size="22" font-weight="normal" fill="#1e1e1e" text-anchor="start" >r</text>
<rect x="1097.5" y="1212.5" width="183" height="44" rx="5" fill="#ffffff" stroke="#aaaaaa" stroke-width="1.3" />
<line x1="1252" y1="1215" x2="1252" y2="1254" stroke="#c8c8c8" stroke-width="1" />
<path d="M1259 1230.5 L1273 1230.5 L1266 1223.5 Z" fill="#555" />
<path d="M1259 1238.5 L1273 1238.5 L1266 1245.5 Z" fill="#555" />
<text x="1106" y="1243" font-family="Liberation Sans" font-size="22" font-weight="normal" fill="#1e1e1e" text-anchor="start" textLength="57" lengthAdjust="spacingAndGlyphs" >100%</text>
<clipPath id="ca2"><rect x="1300" y="1215" width="10" height="40"/></clipPath>
<g clip-path="url(#ca2)">
<text x="1296" y="1244" font-family="Liberation Sans" font-size="22" font-weight="normal" fill="#111" text-anchor="start" >a</text>
</g>
<rect x="1326.5" y="1213.5" width="184.5" height="41" rx="5" fill="#ffffff" stroke="#aaaaaa" stroke-width="1.3" />
<line x1="1482" y1="1215" x2="1482" y2="1253" stroke="#c8c8c8" stroke-width="1" />
<path d="M1489 1230.0 L1503 1230.0 L1496 1223.0 Z" fill="#555" />
<path d="M1489 1238.0 L1503 1238.0 L1496 1245.0 Z" fill="#555" />
<text x="1337" y="1243" font-family="Liberation Sans" font-size="22" font-weight="normal" fill="#1e1e1e" text-anchor="start" textLength="51" lengthAdjust="spacingAndGlyphs" >0.0 °</text>
<rect x="1524.5" y="1221.5" width="27" height="27" rx="2" fill="#ffffff" stroke="#b0b0b0" stroke-width="1.2" />
<path d="M1531.28 1235.56 L1536.04 1242.84 L1545.84 1226.6" fill="none" stroke="#1a1a1a" stroke-width="2.6" />
<text x="1563" y="1243" font-family="Liberation Sans" font-size="22" font-weight="normal" fill="#1e1e1e" text-anchor="start" textLength="73" lengthAdjust="spacingAndGlyphs" >Render</text>
<circle cx="1684" cy="1235" r="14" fill="none" stroke="#777" stroke-width="1.6"/>
<ellipse cx="1684" cy="1235" rx="6" ry="14" fill="none" stroke="#777" stroke-width="1.4"/>
<path d="M1671 1229 H1697 M1670 1235 H1698 M1671 1241 H1697 M1684 1221 V1249" fill="none" stroke="#777" stroke-width="1.3" />
<text x="1705" y="1243" font-family="Liberation Sans" font-size="22" font-weight="normal" fill="#1e1e1e" text-anchor="start" textLength="117" lengthAdjust="spacingAndGlyphs" >EPSG:3857</text>
<path d="M1886 1219 C1896 1219 1903 1225 1903 1232 C1903 1239 1897 1244 1890 1245 L1896 1251 L1884 1246 C1875 1246 1869 1239 1869 1232 C1869 1225 1876 1219 1886 1219 Z" fill="#606060" />
<circle cx="1878" cy="1232" r="2.5" fill="#fff"/>
<circle cx="1886" cy="1232" r="2.5" fill="#fff"/>
<circle cx="1894" cy="1232" r="2.5" fill="#fff"/>
<rect x="4" y="74" width="2" height="2" rx="0" fill="#c8c8c8" />
<rect x="10" y="74" width="2" height="2" rx="0" fill="#c8c8c8" />
<rect x="4" y="80" width="2" height="2" rx="0" fill="#c8c8c8" />
<rect x="10" y="80" width="2" height="2" rx="0" fill="#c8c8c8" />
<rect x="4" y="86" width="2" height="2" rx="0" fill="#c8c8c8" />
<rect x="10" y="86" width="2" height="2" rx="0" fill="#c8c8c8" />
<rect x="4" y="92" width="2" height="2" rx="0" fill="#c8c8c8" />
<rect x="10" y="92" width="2" height="2" rx="0" fill="#c8c8c8" />
<rect x="4" y="98" width="2" height="2" rx="0" fill="#c8c8c8" />
<rect x="10" y="98" width="2" height="2" rx="0" fill="#c8c8c8" />
<rect x="4" y="104" width="2" height="2" rx="0" fill="#c8c8c8" />
<rect x="10" y="104" width="2" height="2" rx="0" fill="#c8c8c8" />
<rect x="432" y="74" width="2" height="2" rx="0" fill="#c8c8c8" />
<rect x="438" y="74" width="2" height="2" rx="0" fill="#c8c8c8" />
<rect x="432" y="80" width="2" height="2" rx="0" fill="#c8c8c8" />
<rect x="438" y="80" width="2" height="2" rx="0" fill="#c8c8c8" />
<rect x="432" y="86" width="2" height="2" rx="0" fill="#c8c8c8" />
<rect x="438" y="86" width="2" height="2" rx="0" fill="#c8c8c8" />
<rect x="432" y="92" width="2" height="2" rx="0" fill="#c8c8c8" />
<rect x="438" y="92" width="2" height="2" rx="0" fill="#c8c8c8" />
<rect x="432" y="98" width="2" height="2" rx="0" fill="#c8c8c8" />
<rect x="438" y="98" width="2" height="2" rx="0" fill="#c8c8c8" />
<rect x="432" y="104" width="2" height="2" rx="0" fill="#c8c8c8" />
<rect x="438" y="104" width="2" height="2" rx="0" fill="#c8c8c8" />
<rect x="1520" y="74" width="2" height="2" rx="0" fill="#c8c8c8" />
<rect x="1526" y="74" width="2" height="2" rx="0" fill="#c8c8c8" />
<rect x="1520" y="80" width="2" height="2" rx="0" fill="#c8c8c8" />
<rect x="1526" y="80" width="2" height="2" rx="0" fill="#c8c8c8" />
<rect x="1520" y="86" width="2" height="2" rx="0" fill="#c8c8c8" />
<rect x="1526" y="86" width="2" height="2" rx="0" fill="#c8c8c8" />
<rect x="1520" y="92" width="2" height="2" rx="0" fill="#c8c8c8" />
<rect x="1526" y="92" width="2" height="2" rx="0" fill="#c8c8c8" />
<rect x="1520" y="98" width="2" height="2" rx="0" fill="#c8c8c8" />
<rect x="1526" y="98" width="2" height="2" rx="0" fill="#c8c8c8" />
<rect x="1520" y="104" width="2" height="2" rx="0" fill="#c8c8c8" />
<rect x="1526" y="104" width="2" height="2" rx="0" fill="#c8c8c8" />
<rect x="4" y="152" width="2" height="2" rx="0" fill="#c8c8c8" />
<rect x="10" y="152" width="2" height="2" rx="0" fill="#c8c8c8" />
<rect x="4" y="158" width="2" height="2" rx="0" fill="#c8c8c8" />
<rect x="10" y="158" width="2" height="2" rx="0" fill="#c8c8c8" />
<rect x="4" y="164" width="2" height="2" rx="0" fill="#c8c8c8" />
<rect x="10" y="164" width="2" height="2" rx="0" fill="#c8c8c8" />
<rect x="4" y="170" width="2" height="2" rx="0" fill="#c8c8c8" />
<rect x="10" y="170" width="2" height="2" rx="0" fill="#c8c8c8" />
<rect x="4" y="176" width="2" height="2" rx="0" fill="#c8c8c8" />
<rect x="10" y="176" width="2" height="2" rx="0" fill="#c8c8c8" />
<rect x="4" y="182" width="2" height="2" rx="0" fill="#c8c8c8" />
<rect x="10" y="182" width="2" height="2" rx="0" fill="#c8c8c8" />
<rect x="498" y="152" width="2" height="2" rx="0" fill="#c8c8c8" />
<rect x="504" y="152" width="2" height="2" rx="0" fill="#c8c8c8" />
<rect x="498" y="158" width="2" height="2" rx="0" fill="#c8c8c8" />
<rect x="504" y="158" width="2" height="2" rx="0" fill="#c8c8c8" />
<rect x="498" y="164" width="2" height="2" rx="0" fill="#c8c8c8" />
<rect x="504" y="164" width="2" height="2" rx="0" fill="#c8c8c8" />
<rect x="498" y="170" width="2" height="2" rx="0" fill="#c8c8c8" />
<rect x="504" y="170" width="2" height="2" rx="0" fill="#c8c8c8" />
<rect x="498" y="176" width="2" height="2" rx="0" fill="#c8c8c8" />
<rect x="504" y="176" width="2" height="2" rx="0" fill="#c8c8c8" />
<rect x="498" y="182" width="2" height="2" rx="0" fill="#c8c8c8" />
<rect x="504" y="182" width="2" height="2" rx="0" fill="#c8c8c8" />
<rect x="1436" y="152" width="2" height="2" rx="0" fill="#c8c8c8" />
<rect x="1442" y="152" width="2" height="2" rx="0" fill="#c8c8c8" />
<rect x="1436" y="158" width="2" height="2" rx="0" fill="#c8c8c8" />
<rect x="1442" y="158" width="2" height="2" rx="0" fill="#c8c8c8" />
<rect x="1436" y="164" width="2" height="2" rx="0" fill="#c8c8c8" />
<rect x="1442" y="164" width="2" height="2" rx="0" fill="#c8c8c8" />
<rect x="1436" y="170" width="2" height="2" rx="0" fill="#c8c8c8" />
<rect x="1442" y="170" width="2" height="2" rx="0" fill="#c8c8c8" />
<rect x="1436" y="176" width="2" height="2" rx="0" fill="#c8c8c8" />
<rect x="1442" y="176" width="2" height="2" rx="0" fill="#c8c8c8" />
<rect x="1436" y="182" width="2" height="2" rx="0" fill="#c8c8c8" />
<rect x="1442" y="182" width="2" height="2" rx="0" fill="#c8c8c8" />
<rect x="1592" y="152" width="2" height="2" rx="0" fill="#c8c8c8" />
<rect x="1598" y="152" width="2" height="2" rx="0" fill="#c8c8c8" />
<rect x="1592" y="158" width="2" height="2" rx="0" fill="#c8c8c8" />
<rect x="1598" y="158" width="2" height="2" rx="0" fill="#c8c8c8" />
<rect x="1592" y="164" width="2" height="2" rx="0" fill="#c8c8c8" />
<rect x="1598" y="164" width="2" height="2" rx="0" fill="#c8c8c8" />
<rect x="1592" y="170" width="2" height="2" rx="0" fill="#c8c8c8" />
<rect x="1598" y="170" width="2" height="2" rx="0" fill="#c8c8c8" />
<rect x="1592" y="176" width="2" height="2" rx="0" fill="#c8c8c8" />
<rect x="1598" y="176" width="2" height="2" rx="0" fill="#c8c8c8" />
<rect x="1592" y="182" width="2" height="2" rx="0" fill="#c8c8c8" />
<rect x="1598" y="182" width="2" height="2" rx="0" fill="#c8c8c8" />
<rect x="1716" y="152" width="2" height="2" rx="0" fill="#c8c8c8" />
<rect x="1722" y="152" width="2" height="2" rx="0" fill="#c8c8c8" />
<rect x="1716" y="158" width="2" height="2" rx="0" fill="#c8c8c8" />
<rect x="1722" y="158" width="2" height="2" rx="0" fill="#c8c8c8" />
<rect x="1716" y="164" width="2" height="2" rx="0" fill="#c8c8c8" />
<rect x="1722" y="164" width="2" height="2" rx="0" fill="#c8c8c8" />
<rect x="1716" y="170" width="2" height="2" rx="0" fill="#c8c8c8" />
<rect x="1722" y="170" width="2" height="2" rx="0" fill="#c8c8c8" />
<rect x="1716" y="176" width="2" height="2" rx="0" fill="#c8c8c8" />
<rect x="1722" y="176" width="2" height="2" rx="0" fill="#c8c8c8" />
<rect x="1716" y="182" width="2" height="2" rx="0" fill="#c8c8c8" />
<rect x="1722" y="182" width="2" height="2" rx="0" fill="#c8c8c8" />
<rect x="1840" y="152" width="2" height="2" rx="0" fill="#c8c8c8" />
<rect x="1846" y="152" width="2" height="2" rx="0" fill="#c8c8c8" />
<rect x="1840" y="158" width="2" height="2" rx="0" fill="#c8c8c8" />
<rect x="1846" y="158" width="2" height="2" rx="0" fill="#c8c8c8" />
<rect x="1840" y="164" width="2" height="2" rx="0" fill="#c8c8c8" />
<rect x="1846" y="164" width="2" height="2" rx="0" fill="#c8c8c8" />
<rect x="1840" y="170" width="2" height="2" rx="0" fill="#c8c8c8" />
<rect x="1846" y="170" width="2" height="2" rx="0" fill="#c8c8c8" />
<rect x="1840" y="176" width="2" height="2" rx="0" fill="#c8c8c8" />
<rect x="1846" y="176" width="2" height="2" rx="0" fill="#c8c8c8" />
<rect x="1840" y="182" width="2" height="2" rx="0" fill="#c8c8c8" />
<rect x="1846" y="182" width="2" height="2" rx="0" fill="#c8c8c8" />
<rect x="1938" y="152" width="2" height="2" rx="0" fill="#c8c8c8" />
<rect x="1944" y="152" width="2" height="2" rx="0" fill="#c8c8c8" />
<rect x="1938" y="158" width="2" height="2" rx="0" fill="#c8c8c8" />
<rect x="1944" y="158" width="2" height="2" rx="0" fill="#c8c8c8" />
<rect x="1938" y="164" width="2" height="2" rx="0" fill="#c8c8c8" />
<rect x="1944" y="164" width="2" height="2" rx="0" fill="#c8c8c8" />
<rect x="1938" y="170" width="2" height="2" rx="0" fill="#c8c8c8" />
<rect x="1944" y="170" width="2" height="2" rx="0" fill="#c8c8c8" />
<rect x="1938" y="176" width="2" height="2" rx="0" fill="#c8c8c8" />
<rect x="1944" y="176" width="2" height="2" rx="0" fill="#c8c8c8" />
<rect x="1938" y="182" width="2" height="2" rx="0" fill="#c8c8c8" />
<rect x="1944" y="182" width="2" height="2" rx="0" fill="#c8c8c8" />
<rect x="4" y="230" width="2" height="2" rx="0" fill="#c8c8c8" />
<rect x="10" y="230" width="2" height="2" rx="0" fill="#c8c8c8" />
<rect x="4" y="236" width="2" height="2" rx="0" fill="#c8c8c8" />
<rect x="10" y="236" width="2" height="2" rx="0" fill="#c8c8c8" />
<rect x="4" y="242" width="2" height="2" rx="0" fill="#c8c8c8" />
<rect x="10" y="242" width="2" height="2" rx="0" fill="#c8c8c8" />
<rect x="4" y="248" width="2" height="2" rx="0" fill="#c8c8c8" />
<rect x="10" y="248" width="2" height="2" rx="0" fill="#c8c8c8" />
<rect x="4" y="254" width="2" height="2" rx="0" fill="#c8c8c8" />
<rect x="10" y="254" width="2" height="2" rx="0" fill="#c8c8c8" />
<rect x="4" y="260" width="2" height="2" rx="0" fill="#c8c8c8" />
<rect x="10" y="260" width="2" height="2" rx="0" fill="#c8c8c8" />
<rect x="168" y="230" width="2" height="2" rx="0" fill="#c8c8c8" />
<rect x="174" y="230" width="2" height="2" rx="0" fill="#c8c8c8" />
<rect x="168" y="236" width="2" height="2" rx="0" fill="#c8c8c8" />
<rect x="174" y="236" width="2" height="2" rx="0" fill="#c8c8c8" />
<rect x="168" y="242" width="2" height="2" rx="0" fill="#c8c8c8" />
<rect x="174" y="242" width="2" height="2" rx="0" fill="#c8c8c8" />
<rect x="168" y="248" width="2" height="2" rx="0" fill="#c8c8c8" />
<rect x="174" y="248" width="2" height="2" rx="0" fill="#c8c8c8" />
<rect x="168" y="254" width="2" height="2" rx="0" fill="#c8c8c8" />
<rect x="174" y="254" width="2" height="2" rx="0" fill="#c8c8c8" />
<rect x="168" y="260" width="2" height="2" rx="0" fill="#c8c8c8" />
<rect x="174" y="260" width="2" height="2" rx="0" fill="#c8c8c8" />
<rect x="266" y="230" width="2" height="2" rx="0" fill="#c8c8c8" />
<rect x="272" y="230" width="2" height="2" rx="0" fill="#c8c8c8" />
<rect x="266" y="236" width="2" height="2" rx="0" fill="#c8c8c8" />
<rect x="272" y="236" width="2" height="2" rx="0" fill="#c8c8c8" />
<rect x="266" y="242" width="2" height="2" rx="0" fill="#c8c8c8" />
<rect x="272" y="242" width="2" height="2" rx="0" fill="#c8c8c8" />
<rect x="266" y="248" width="2" height="2" rx="0" fill="#c8c8c8" />
<rect x="272" y="248" width="2" height="2" rx="0" fill="#c8c8c8" />
<rect x="266" y="254" width="2" height="2" rx="0" fill="#c8c8c8" />
<rect x="272" y="254" width="2" height="2" rx="0" fill="#c8c8c8" />
<rect x="266" y="260" width="2" height="2" rx="0" fill="#c8c8c8" />
<rect x="272" y="260" width="2" height="2" rx="0" fill="#c8c8c8" />
<rect x="364" y="230" width="2" height="2" rx="0" fill="#c8c8c8" />
<rect x="370" y="230" width="2" height="2" rx="0" fill="#c8c8c8" />
<rect x="364" y="236" width="2" height="2" rx="0" fill="#c8c8c8" />
<rect x="370" y="236" width="2" height="2" rx="0" fill="#c8c8c8" />
<rect x="364" y="242" width="2" height="2" rx="0" fill="#c8c8c8" />
<rect x="370" y="242" width="2" height="2" rx="0" fill="#c8c8c8" />
<rect x="364" y="248" width="2" height="2" rx="0" fill="#c8c8c8" />
<rect x="370" y="248" width="2" height="2" rx="0" fill="#c8c8c8" />
<rect x="364" y="254" width="2" height="2" rx="0" fill="#c8c8c8" />
<rect x="370" y="254" width="2" height="2" rx="0" fill="#c8c8c8" />
<rect x="364" y="260" width="2" height="2" rx="0" fill="#c8c8c8" />
<rect x="370" y="260" width="2" height="2" rx="0" fill="#c8c8c8" />
<path d="M36.5 68.5 H58 L67.5 78 V111.5 H36.5 Z" fill="#ffffff" stroke="#6d6d6d" stroke-width="1.8" />
<path d="M57.5 68.5 V78.5 H67.5" fill="#f0f0f0" stroke="#6d6d6d" stroke-width="1.5" />
<path d="M96 107 V72.5 H110 V76 H134.5 V82 H140.5 L135 107 Z" fill="#fcd94f" stroke="#c3a339" stroke-width="1.3" />
<path d="M96 107 L101.5 82 H140.5 L135 107 Z" fill="#fdd84e" stroke="#c3a339" stroke-width="1.3" />
<rect x="164.5" y="68.5" width="39" height="41.5" rx="5" fill="#6c9acb" stroke="#3f5f87" stroke-width="1.4" />
<rect x="169.5" y="70" width="29" height="18" rx="2" fill="#eeeeee" stroke="#6a6a6a" stroke-width="1" />
<line x1="173" y1="75" x2="195" y2="75" stroke="#555" stroke-width="1.6" />
<line x1="173" y1="79" x2="195" y2="79" stroke="#555" stroke-width="1.6" />
<line x1="173" y1="83" x2="195" y2="83" stroke="#555" stroke-width="1.6" />
<rect x="172" y="95" width="24" height="14" rx="0" fill="#e8e8e8" stroke="#777" stroke-width="1" />
<rect x="175" y="98" width="5" height="8" rx="0" fill="#3f5f87" />
<path d="M228.5 70.5 H264 L271.5 78 V109.5 H228.5 Z" fill="#ffffff" stroke="#707070" stroke-width="1.5" />
<path d="M264 70.5 V78 H271.5" fill="#e8e8e8" stroke="#707070" stroke-width="1.3" />
<path d="M232 72 H252 V81 H239 V112 H232 Z" fill="#fde27a" stroke="#d6ac12" stroke-width="1" />
<line x1="232" y1="85" x2="237" y2="85" stroke="#c79a0d" stroke-width="1.3" />
<line x1="232" y1="90" x2="237" y2="90" stroke="#c79a0d" stroke-width="1.3" />
<line x1="232" y1="95" x2="237" y2="95" stroke="#c79a0d" stroke-width="1.3" />
<line x1="232" y1="100" x2="237" y2="100" stroke="#c79a0d" stroke-width="1.3" />
<line x1="232" y1="105" x2="237" y2="105" stroke="#c79a0d" stroke-width="1.3" />
<rect x="252" y="92" width="22" height="22" rx="4" fill="#c9a00e" />
<line x1="266.0" y1="103.0" x2="271.0" y2="103.0" stroke="#fff" stroke-width="2.4" />
<line x1="264.5" y1="105.59807621135332" x2="267.0" y2="109.92820323027551" stroke="#fff" stroke-width="2.4" />
<line x1="261.5" y1="105.59807621135332" x2="259.0" y2="109.92820323027551" stroke="#fff" stroke-width="2.4" />
<line x1="260.0" y1="103.0" x2="255.0" y2="103.0" stroke="#fff" stroke-width="2.4" />
<line x1="261.5" y1="100.40192378864668" x2="259.0" y2="96.0717967697245" stroke="#fff" stroke-width="2.4" />
<line x1="264.5" y1="100.40192378864668" x2="267.0" y2="96.07179676972449" stroke="#fff" stroke-width="2.4" />
<circle cx="263.0" cy="103.0" r="4.5" fill="#fff"/><circle cx="263.0" cy="103.0" r="2" fill="#c9a00e"/>
<path d="M294.5 70.5 H330 L338 78 V109.5 H294.5 Z" fill="#ffffff" stroke="#707070" stroke-width="1.5" />
<path d="M330 70.5 V78 H338" fill="#e8e8e8" stroke="#707070" stroke-width="1.3" />
<rect x="299" y="75" width="33" height="30" rx="0" fill="none" stroke="#b8ccf0" stroke-width="1.3" />
<line x1="318" y1="95" x2="333" y2="111" stroke="#333" stroke-width="7" stroke-linecap="round"/>
<line x1="318" y1="95" x2="333" y2="111" stroke="#e8d070" stroke-width="4.5" stroke-linecap="round"/>
<path d="M309 84 C305 77 311 72 318 74 L313 80 L316 84 L322 79 C325 86 320 92 314 90 L320 97 L317 100 L310 92 C307 90 307 87 309 84 Z" fill="#ececec" stroke="#444" stroke-width="1.4" />
<circle cx="371" cy="78.5" r="8.5" fill="#d2663a" stroke="#8e3d1e" stroke-width="1"/>
<line x1="387" y1="84" x2="401" y2="72" stroke="#3e6d9e" stroke-width="5" stroke-linecap="round"/>
<line x1="387" y1="84" x2="401" y2="72" stroke="#6a9ad0" stroke-width="3" stroke-linecap="round"/>
<rect x="362.5" y="92" width="17" height="17" rx="0" fill="#8fb48f" stroke="#3f7f3f" stroke-width="1.5" />
<text x="386" y="109" font-family="Liberation Sans" font-size="22" font-weight="normal" fill="#333" text-anchor="start" >a</text>
<rect x="448.5" y="60.5" width="63" height="60.5" rx="6" fill="#d7d7d7" stroke="#b2b2b2" stroke-width="1.2" />
<path d="M468 97 C464 92 462 88 465 86 C468 84 471 88 473 91 V72 C473 68 478 68 478 72 V86 V69 C478 65 483 65 483 69 V86 V71 C483 67 488 67 488 71 V87 V75 C488 71 493 71 493 75 V95 C493 103 490 108 489 112 H474 C472 106 470 101 468 97 Z" fill="#ffffff" stroke="#111" stroke-width="2" />
<rect x="526" y="70" width="28" height="28" rx="0" fill="#fde74a" stroke="#c9a20a" stroke-width="1.8" />
<g transform="rotate(0 546 90)"><path d="M546 67 L557 78 H550 V90 H542 V78 H535 Z" fill="#6a9ad0" stroke="#3e5f87" stroke-width="1.2"/></g>
<g transform="rotate(90 546 90)"><path d="M546 67 L557 78 H550 V90 H542 V78 H535 Z" fill="#6a9ad0" stroke="#3e5f87" stroke-width="1.2"/></g>
<g transform="rotate(180 546 90)"><path d="M546 67 L557 78 H550 V90 H542 V78 H535 Z" fill="#6a9ad0" stroke="#3e5f87" stroke-width="1.2"/></g>
<g transform="rotate(270 546 90)"><path d="M546 67 L557 78 H550 V90 H542 V78 H535 Z" fill="#6a9ad0" stroke="#3e5f87" stroke-width="1.2"/></g>
<line x1="608.854129880731" y1="92.84587011926902" x2="592.1890372617264" y2="109.51096273827358" stroke="#2a2a2a" stroke-width="7" stroke-linecap="butt"/>
<line x1="606.354129880731" y1="95.34587011926902" x2="592.6890372617264" y2="109.01096273827358" stroke="#f5c531" stroke-width="3.2" />
<circle cx="617" cy="84.7" r="16" fill="#ececec" stroke="#5e5e5e" stroke-width="2.2" fill-opacity="0.9"/>
<rect x="607" y="82.5" width="20" height="4.5" rx="2" fill="#6a9ad0" stroke="#3e5f87" stroke-width="0.8" />
<rect x="614.7" y="74.7" width="4.5" height="20" rx="2" fill="#6a9ad0" stroke="#3e5f87" stroke-width="0.8" />
<line x1="674.854129880731" y1="92.64587011926903" x2="658.1890372617264" y2="109.31096273827357" stroke="#2a2a2a" stroke-width="7" stroke-linecap="butt"/>
<line x1="672.354129880731" y1="95.14587011926903" x2="658.6890372617264" y2="108.81096273827357" stroke="#f5c531" stroke-width="3.2" />
<circle cx="683" cy="84.5" r="16" fill="#ececec" stroke="#5e5e5e" stroke-width="2.2" fill-opacity="0.9"/>
<rect x="673" y="82" width="20" height="5" rx="2" fill="#6a9ad0" stroke="#3e5f87" stroke-width="0.8" />
<line x1="739.854129880731" y1="92.64587011926903" x2="723.1890372617264" y2="109.31096273827357" stroke="#2a2a2a" stroke-width="7" stroke-linecap="butt"/>
<line x1="737.354129880731" y1="95.14587011926903" x2="723.6890372617264" y2="108.81096273827357" stroke="#f5c531" stroke-width="3.2" />
<circle cx="748" cy="84.5" r="16" fill="#ececec" stroke="#5e5e5e" stroke-width="2.2" fill-opacity="0.9"/>
<g transform="rotate(0 729 68)"><path d="M729 68 H744 L740 72 L746 78 L739 85 L733 79 V83 Z" fill="#6a9ad0" stroke="#3e5f87" stroke-width="1.2"/></g>
<g transform="rotate(90 766 68)"><path d="M766 68 H781 L777 72 L783 78 L776 85 L770 79 V83 Z" fill="#6a9ad0" stroke="#3e5f87" stroke-width="1.2"/></g>
<g transform="rotate(180 766 106)"><path d="M766 106 H781 L777 110 L783 116 L776 123 L770 117 V121 Z" fill="#6a9ad0" stroke="#3e5f87" stroke-width="1.2"/></g>
<g transform="rotate(270 729 106)"><path d="M729 106 H744 L740 110 L746 116 L739 123 L733 117 V121 Z" fill="#6a9ad0" stroke="#3e5f87" stroke-width="1.2"/></g>
<rect x="790" y="70" width="16" height="27" rx="0" fill="#fde74a" stroke="#c9a20a" stroke-width="1.5" />
<line x1="806.3450129982766" y1="92.25498700172334" x2="788.6383520905844" y2="109.96164790941567" stroke="#2a2a2a" stroke-width="7" stroke-linecap="butt"/>
<line x1="803.8450129982766" y1="94.75498700172334" x2="789.1383520905844" y2="109.46164790941567" stroke="#f5c531" stroke-width="3.2" />
<circle cx="815" cy="83.6" r="17" fill="#ececec" stroke="#5e5e5e" stroke-width="2.2" fill-opacity="0.9"/>
<rect x="857" y="70" width="24" height="27" rx="0" fill="#ececec" stroke="#7a7a7a" stroke-width="1.5" />
<line x1="873.3450129982766" y1="92.25498700172334" x2="855.6383520905844" y2="109.96164790941567" stroke="#2a2a2a" stroke-width="7" stroke-linecap="butt"/>
<line x1="870.8450129982766" y1="94.75498700172334" x2="856.1383520905844" y2="109.46164790941567" stroke="#f5c531" stroke-width="3.2" />
<circle cx="882" cy="83.6" r="17" fill="#ececec" stroke="#5e5e5e" stroke-width="2.2" fill-opacity="0.9"/>
<rect x="922" y="71" width="20" height="26" rx="0" fill="none" stroke="#d8d8d8" stroke-width="1.5" />
<line x1="938.854129880731" y1="93.14587011926903" x2="922.1890372617264" y2="109.81096273827357" stroke="#cccccc" stroke-width="7" stroke-linecap="butt"/>
<line x1="936.354129880731" y1="95.64587011926903" x2="922.6890372617264" y2="109.31096273827357" stroke="#dedede" stroke-width="3.2" />
<circle cx="947" cy="85" r="16" fill="#f0f0f0" stroke="#c8c8c8" stroke-width="2.2" fill-opacity="0.9"/>
<text x="947" y="92" font-family="Liberation Sans" font-size="16" font-weight="bold" fill="#c4c4c4" text-anchor="middle" >1:1</text>
<line x1="1003.854129880731" y1="93.14587011926903" x2="987.1890372617264" y2="109.81096273827357" stroke="#2a2a2a" stroke-width="7" stroke-linecap="butt"/>
<line x1="1001.354129880731" y1="95.64587011926903" x2="987.6890372617264" y2="109.31096273827357" stroke="#f5c531" stroke-width="3.2" />
<circle cx="1012" cy="85" r="16" fill="#ececec" stroke="#5e5e5e" stroke-width="2.2" fill-opacity="0.9"/>
<rect x="1010" y="92" width="22" height="21" rx="3" fill="#6a9ad0" stroke="#3e5f87" stroke-width="1.2" />
<path d="M1025 96 L1016 102.5 L1025 109" fill="none" stroke="#fff" stroke-width="3" />
<line x1="1070.854129880731" y1="93.14587011926903" x2="1054.1890372617265" y2="109.81096273827357" stroke="#cccccc" stroke-width="7" stroke-linecap="butt"/>
<line x1="1068.354129880731" y1="95.64587011926903" x2="1054.6890372617265" y2="109.31096273827357" stroke="#dedede" stroke-width="3.2" />
<circle cx="1079" cy="85" r="16" fill="#f0f0f0" stroke="#c8c8c8" stroke-width="2.2" fill-opacity="0.9"/>
<rect x="1076" y="92" width="22" height="21" rx="3" fill="#dcdcdc" stroke="#cccccc" stroke-width="1.2" />
<path d="M1083 96 L1092 102.5 L1083 109" fill="none" stroke="#fff" stroke-width="3" />
<path d="M1126 70 H1160 V110 H1126 Z" fill="url(#tb)" stroke="#a0a0a0" stroke-width="1.5" />
<path d="M1121 72 C1121 68 1128 68 1128 72 V106 C1128 102 1121 102 1121 106 Z" fill="#e6e6e6" stroke="#a0a0a0" stroke-width="1.5" />
<rect x="1142" y="92" width="22" height="22" rx="4" fill="#c9a00e" />
<line x1="1156.0" y1="103.0" x2="1161.0" y2="103.0" stroke="#fff" stroke-width="2.4" />
<line x1="1154.5" y1="105.59807621135332" x2="1157.0" y2="109.92820323027551" stroke="#fff" stroke-width="2.4" />
<line x1="1151.5" y1="105.59807621135332" x2="1149.0" y2="109.92820323027551" stroke="#fff" stroke-width="2.4" />
<line x1="1150.0" y1="103.0" x2="1145.0" y2="103.0" stroke="#fff" stroke-width="2.4" />
<line x1="1151.5" y1="100.40192378864668" x2="1149.0" y2="96.0717967697245" stroke="#fff" stroke-width="2.4" />
<line x1="1154.5" y1="100.40192378864668" x2="1157.0" y2="96.07179676972449" stroke="#fff" stroke-width="2.4" />
<circle cx="1153.0" cy="103.0" r="4.5" fill="#fff"/><circle cx="1153.0" cy="103.0" r="2" fill="#c9a00e"/>
<path d="M1184 102 L1193 76 L1224 74 L1226 100 Z" fill="#e8e8e8" stroke="#a8a8a8" stroke-width="1.2" />
<path d="M1190 84 L1224 82 M1187 92 L1225 91 M1203 75 L1199 101 M1214 75 L1212 101" fill="none" stroke="#b0b0b0" stroke-width="1" />
<rect x="1208" y="92" width="22" height="22" rx="4" fill="#c9a00e" />
<line x1="1222.0" y1="103.0" x2="1227.0" y2="103.0" stroke="#fff" stroke-width="2.4" />
<line x1="1220.5" y1="105.59807621135332" x2="1223.0" y2="109.92820323027551" stroke="#fff" stroke-width="2.4" />
<line x1="1217.5" y1="105.59807621135332" x2="1215.0" y2="109.92820323027551" stroke="#fff" stroke-width="2.4" />
<line x1="1216.0" y1="103.0" x2="1211.0" y2="103.0" stroke="#fff" stroke-width="2.4" />
<line x1="1217.5" y1="100.40192378864668" x2="1215.0" y2="96.0717967697245" stroke="#fff" stroke-width="2.4" />
<line x1="1220.5" y1="100.40192378864668" x2="1223.0" y2="96.07179676972449" stroke="#fff" stroke-width="2.4" />
<circle cx="1219.0" cy="103.0" r="4.5" fill="#fff"/><circle cx="1219.0" cy="103.0" r="2" fill="#c9a00e"/>
<path d="M1263 68.5 H1282 V110 L1272 102 L1263 110 Z" fill="#6a9ad0" stroke="#3e5f87" stroke-width="1.8" />
<rect x="1274" y="92" width="22" height="22" rx="4" fill="#c9a00e" />
<line x1="1288.0" y1="103.0" x2="1293.0" y2="103.0" stroke="#fff" stroke-width="2.4" />
<line x1="1286.5" y1="105.59807621135332" x2="1289.0" y2="109.92820323027551" stroke="#fff" stroke-width="2.4" />
<line x1="1283.5" y1="105.59807621135332" x2="1281.0" y2="109.92820323027551" stroke="#fff" stroke-width="2.4" />
<line x1="1282.0" y1="103.0" x2="1277.0" y2="103.0" stroke="#fff" stroke-width="2.4" />
<line x1="1283.5" y1="100.40192378864668" x2="1281.0" y2="96.0717967697245" stroke="#fff" stroke-width="2.4" />
<line x1="1286.5" y1="100.40192378864668" x2="1289.0" y2="96.07179676972449" stroke="#fff" stroke-width="2.4" />
<circle cx="1285.0" cy="103.0" r="4.5" fill="#fff"/><circle cx="1285.0" cy="103.0" r="2" fill="#c9a00e"/>
<path d="M1324 70 H1358 V110 H1324 Z" fill="url(#tb)" stroke="#a0a0a0" stroke-width="1.5" />
<path d="M1319 72 C1319 68 1326 68 1326 72 V106 C1326 102 1319 102 1319 106 Z" fill="#e6e6e6" stroke="#a0a0a0" stroke-width="1.5" />
<path d="M1340 68 H1350 V82 L1345 87 L1340 82 Z" fill="#6a9ad0" stroke="#3e5f87" stroke-width="1.2" />
<circle cx="1404" cy="89.5" r="21" fill="#efefef" stroke="#3a3a3a" stroke-width="2"/>
<circle cx="1421.0" cy="89.5" r="1.3" fill="#2f4f7f"/>
<circle cx="1418.7" cy="98.0" r="1.3" fill="#6a9ad0"/>
<circle cx="1412.5" cy="104.2" r="1.3" fill="#6a9ad0"/>
<circle cx="1404.0" cy="106.5" r="1.3" fill="#2f4f7f"/>
<circle cx="1395.5" cy="104.2" r="1.3" fill="#6a9ad0"/>
<circle cx="1389.3" cy="98.0" r="1.3" fill="#6a9ad0"/>
<circle cx="1387.0" cy="89.5" r="1.3" fill="#2f4f7f"/>
<circle cx="1389.3" cy="81.0" r="1.3" fill="#6a9ad0"/>
<circle cx="1395.5" cy="74.8" r="1.3" fill="#6a9ad0"/>
<circle cx="1404.0" cy="72.5" r="1.3" fill="#2f4f7f"/>
<circle cx="1412.5" cy="74.8" r="1.3" fill="#6a9ad0"/>
<circle cx="1418.7" cy="81.0" r="1.3" fill="#6a9ad0"/>
<path d="M1404 73 V89.5 L1413 97" fill="none" stroke="#8a8a8a" stroke-width="2.5" />
<g transform="translate(1449 68) scale(1.5)">
<path d="M2 14 C2 6 10 1 17 2 C20 2.5 22 4 24 5 L27 1 V12 H16 L20 8 C16 5 9 6 7 13 Z" fill="#5a94d0" stroke="#3d74b0" stroke-width="0.8" />
<path d="M26 14 C26 22 18 27 11 26 C8 25.5 6 24 4 23 L1 27 V16 H12 L8 20 C12 23 19 22 21 15 Z" fill="#5a94d0" stroke="#3d74b0" stroke-width="0.8" />
</g>
<circle cx="1561" cy="84" r="16" fill="#6b9bd1" stroke="#41689a" stroke-width="1.3"/>
<text x="1561" y="92.8" font-family="Liberation Serif" font-size="24.0" font-weight="bold" fill="#ffffff" text-anchor="middle" font-style="italic">i</text>
<path d="M1568 84 L1590 104 L1582 105 L1588 113 L1584 115 L1578 107 L1572 112 Z" fill="#ffffff" stroke="#111" stroke-width="1.5" />
<path d="M1613 70 V110 M1655 70 V110" fill="none" stroke="#5a5a5a" stroke-width="2" />
<rect x="1612" y="108" width="44" height="4" rx="0" fill="#777" />
<line x1="1614" y1="77" x2="1654" y2="77" stroke="#555" stroke-width="1.5" />
<line x1="1614" y1="88" x2="1654" y2="88" stroke="#555" stroke-width="1.5" />
<line x1="1614" y1="100" x2="1654" y2="100" stroke="#555" stroke-width="1.5" />
<circle cx="1629" cy="77" r="3.8" fill="#f07070" stroke="#a02020" stroke-width="1.2"/>
<circle cx="1643" cy="77" r="3.8" fill="#f07070" stroke="#a02020" stroke-width="1.2"/>
<circle cx="1624" cy="88" r="3.8" fill="#a8e098" stroke="#3f8f3f" stroke-width="1.2"/>
<circle cx="1634" cy="88" r="3.8" fill="#a8e098" stroke="#3f8f3f" stroke-width="1.2"/>
<circle cx="1624" cy="100" r="3.8" fill="#b8d8f0" stroke="#3e6d9e" stroke-width="1.2"/>
<circle cx="1634" cy="100" r="3.8" fill="#b8d8f0" stroke="#3e6d9e" stroke-width="1.2"/>
<circle cx="1644" cy="100" r="3.8" fill="#b8d8f0" stroke="#3e6d9e" stroke-width="1.2"/>
<rect x="1695" y="67.5" width="10" height="12" rx="3" fill="#8ab0de" stroke="#4a7cc0" stroke-width="1.8" transform="rotate(0 1700 90)"/>
<rect x="1695" y="67.5" width="10" height="12" rx="3" fill="#8ab0de" stroke="#4a7cc0" stroke-width="1.8" transform="rotate(45 1700 90)"/>
<rect x="1695" y="67.5" width="10" height="12" rx="3" fill="#8ab0de" stroke="#4a7cc0" stroke-width="1.8" transform="rotate(90 1700 90)"/>
<rect x="1695" y="67.5" width="10" height="12" rx="3" fill="#8ab0de" stroke="#4a7cc0" stroke-width="1.8" transform="rotate(135 1700 90)"/>
<rect x="1695" y="67.5" width="10" height="12" rx="3" fill="#8ab0de" stroke="#4a7cc0" stroke-width="1.8" transform="rotate(180 1700 90)"/>
<rect x="1695" y="67.5" width="10" height="12" rx="3" fill="#8ab0de" stroke="#4a7cc0" stroke-width="1.8" transform="rotate(225 1700 90)"/>
<rect x="1695" y="67.5" width="10" height="12" rx="3" fill="#8ab0de" stroke="#4a7cc0" stroke-width="1.8" transform="rotate(270 1700 90)"/>
<rect x="1695" y="67.5" width="10" height="12" rx="3" fill="#8ab0de" stroke="#4a7cc0" stroke-width="1.8" transform="rotate(315 1700 90)"/>
<circle cx="1700" cy="90" r="15.5" fill="#8ab0de" stroke="#4a7cc0" stroke-width="1.8"/>
<rect x="1696.5" y="70" width="7" height="8" fill="#8ab0de" transform="rotate(0 1700 90)"/>
<rect x="1696.5" y="70" width="7" height="8" fill="#8ab0de" transform="rotate(45 1700 90)"/>
<rect x="1696.5" y="70" width="7" height="8" fill="#8ab0de" transform="rotate(90 1700 90)"/>
<rect x="1696.5" y="70" width="7" height="8" fill="#8ab0de" transform="rotate(135 1700 90)"/>
<rect x="1696.5" y="70" width="7" height="8" fill="#8ab0de" transform="rotate(180 1700 90)"/>
<rect x="1696.5" y="70" width="7" height="8" fill="#8ab0de" transform="rotate(225 1700 90)"/>
<rect x="1696.5" y="70" width="7" height="8" fill="#8ab0de" transform="rotate(270 1700 90)"/>
<rect x="1696.5" y="70" width="7" height="8" fill="#8ab0de" transform="rotate(315 1700 90)"/>
<circle cx="1700" cy="90" r="5.5" fill="#fff" stroke="#4a7cc0" stroke-width="1.8"/>
<path d="M1752 71 H1781 L1783 80 H1779 C1778 77 1776 76 1773 76 H1763 L1774 89 L1761 104 H1776 C1779 104 1781 102 1782 99 H1785 L1781 109 H1751 V106 L1766 89 L1752 73 Z" fill="#9c16aa" stroke="#6e0b7a" stroke-width="0.8" />
<rect x="1812.5" y="70.5" width="39" height="39" rx="0" fill="#e4ecf6" stroke="#6a9ad0" stroke-width="2" />
<rect x="1812.5" y="70.5" width="39" height="9" rx="0" fill="#b4cce8" stroke="#6a9ad0" stroke-width="2" />
<rect x="1817" y="73" width="7" height="4" rx="0" fill="#5a8ac4" />
<rect x="1828" y="73" width="19" height="4" rx="0" fill="#5a8ac4" />
<line x1="1817" y1="85" x2="1824" y2="85" stroke="#5a8ac4" stroke-width="1.8" />
<line x1="1828" y1="85" x2="1847" y2="85" stroke="#5a8ac4" stroke-width="1.8" />
<line x1="1817" y1="91" x2="1824" y2="91" stroke="#5a8ac4" stroke-width="1.8" />
<line x1="1828" y1="91" x2="1847" y2="91" stroke="#5a8ac4" stroke-width="1.8" />
<line x1="1817" y1="97" x2="1824" y2="97" stroke="#5a8ac4" stroke-width="1.8" />
<line x1="1828" y1="97" x2="1847" y2="97" stroke="#5a8ac4" stroke-width="1.8" />
<line x1="1817" y1="103" x2="1824" y2="103" stroke="#5a8ac4" stroke-width="1.8" />
<line x1="1828" y1="103" x2="1847" y2="103" stroke="#5a8ac4" stroke-width="1.8" />
<path d="M1869.0 86.0 L1883.0 86.0 L1876 94.0 Z" fill="#555" />
<path d="M1937 84 L1942 90 L1937 96 M1944 84 L1949 90 L1944 96" fill="none" stroke="#333" stroke-width="2" />
<path d="M30 157 L46 150 L54 178 L38 185 Z" fill="#e06a2a" stroke="#9a4012" stroke-width="1.2" />
<path d="M36 150 L52 147 L56 176 L40 179 Z" fill="#f2c22a" stroke="#a8860a" stroke-width="1.2" />
<path d="M44 144 L73 151 L68 175 L40 168 Z" fill="#6a9ad0" stroke="#3e5f87" stroke-width="1.5" />
<rect x="58" y="174" width="18" height="18" rx="2" fill="#5a985a" />
<path d="M60.5 183.0 H73.5 M67.0 176.5 V189.5" fill="none" stroke="#fff" stroke-width="2.2" />
<path d="M95 158 L118 151 L141 158" fill="none" stroke="#111" stroke-width="1.5" />
<circle cx="118.6" cy="157" r="15.5" fill="#a9c4e4" stroke="#6a8fb8" stroke-width="1"/>
<path d="M108 150 C112 146 118 147 116 152 C114 156 110 158 112 162 C108 162 106 156 108 150 Z M120 146 C126 146 131 150 130 156 C127 154 124 158 126 162 C122 162 119 156 122 153 C119 151 118 148 120 146 Z" fill="#3a5f8a" />
<path d="M95 158 L118 165 V192 L95 182 Z" fill="#dcac0a" stroke="#111" stroke-width="1.5" />
<path d="M118 165 L141 158 V182 L118 192 Z" fill="#fcee78" stroke="#111" stroke-width="1.5" />
<rect x="124" y="174" width="18" height="18" rx="3" fill="#c9a00e" />
<line x1="134.5" y1="183.0" x2="139.5" y2="183.0" stroke="#fff" stroke-width="2.6" stroke-linecap="round"/>
<line x1="134.06066017177983" y1="184.06066017177983" x2="137.59619407771257" y2="187.59619407771257" stroke="#fff" stroke-width="2.6" stroke-linecap="round"/>
<line x1="133.0" y1="184.5" x2="133.0" y2="189.5" stroke="#fff" stroke-width="2.6" stroke-linecap="round"/>
<line x1="131.93933982822017" y1="184.06066017177983" x2="128.40380592228743" y2="187.59619407771257" stroke="#fff" stroke-width="2.6" stroke-linecap="round"/>
<line x1="131.5" y1="183.0" x2="126.5" y2="183.0" stroke="#fff" stroke-width="2.6" stroke-linecap="round"/>
<line x1="131.93933982822017" y1="181.93933982822017" x2="128.40380592228743" y2="178.40380592228743" stroke="#fff" stroke-width="2.6" stroke-linecap="round"/>
<line x1="133.0" y1="181.5" x2="133.0" y2="176.5" stroke="#fff" stroke-width="2.6" stroke-linecap="round"/>
<line x1="134.06066017177983" y1="181.93933982822017" x2="137.59619407771257" y2="178.40380592228743" stroke="#fff" stroke-width="2.6" stroke-linecap="round"/>
<path d="M165 149 L178 178 L191 149 H203" fill="none" stroke="#2a3f55" stroke-width="2.5" />
<circle cx="165" cy="149" r="3.5" fill="#fff" stroke="#2a3f55" stroke-width="2"/>
<circle cx="178" cy="178" r="3.5" fill="#fff" stroke="#2a3f55" stroke-width="2"/>
<circle cx="191" cy="149" r="3.5" fill="#fff" stroke="#2a3f55" stroke-width="2"/>
<circle cx="203" cy="149" r="3.5" fill="#fff" stroke="#2a3f55" stroke-width="2"/>
<rect x="190" y="174" width="18" height="18" rx="3" fill="#c9a00e" />
<line x1="200.5" y1="183.0" x2="205.5" y2="183.0" stroke="#fff" stroke-width="2.6" stroke-linecap="round"/>
<line x1="200.06066017177983" y1="184.06066017177983" x2="203.59619407771257" y2="187.59619407771257" stroke="#fff" stroke-width="2.6" stroke-linecap="round"/>
<line x1="199.0" y1="184.5" x2="199.0" y2="189.5" stroke="#fff" stroke-width="2.6" stroke-linecap="round"/>
<line x1="197.93933982822017" y1="184.06066017177983" x2="194.40380592228743" y2="187.59619407771257" stroke="#fff" stroke-width="2.6" stroke-linecap="round"/>
<line x1="197.5" y1="183.0" x2="192.5" y2="183.0" stroke="#fff" stroke-width="2.6" stroke-linecap="round"/>
<line x1="197.93933982822017" y1="181.93933982822017" x2="194.40380592228743" y2="178.40380592228743" stroke="#fff" stroke-width="2.6" stroke-linecap="round"/>
<line x1="199.0" y1="181.5" x2="199.0" y2="176.5" stroke="#fff" stroke-width="2.6" stroke-linecap="round"/>
<line x1="200.06066017177983" y1="181.93933982822017" x2="203.59619407771257" y2="178.40380592228743" stroke="#fff" stroke-width="2.6" stroke-linecap="round"/>
<path d="M227 191 C232 170 250 150 271 144 C270 160 258 172 240 178 C236 182 232 186 227 191 Z" fill="#8ab0de" stroke="#2f4f6f" stroke-width="1.5" />
<line x1="245" y1="172" x2="262.0" y2="160" stroke="#f4f8fc" stroke-width="1" />
<line x1="249" y1="168" x2="263.5" y2="157" stroke="#f4f8fc" stroke-width="1" />
<line x1="253" y1="164" x2="265.0" y2="154" stroke="#f4f8fc" stroke-width="1" />
<line x1="257" y1="160" x2="266.5" y2="151" stroke="#f4f8fc" stroke-width="1" />
<line x1="261" y1="156" x2="268.0" y2="148" stroke="#f4f8fc" stroke-width="1" />
<line x1="265" y1="152" x2="269.5" y2="145" stroke="#f4f8fc" stroke-width="1" />
<rect x="256" y="174" width="18" height="18" rx="3" fill="#c9a00e" />
<line x1="266.5" y1="183.0" x2="271.5" y2="183.0" stroke="#fff" stroke-width="2.6" stroke-linecap="round"/>
<line x1="266.06066017177983" y1="184.06066017177983" x2="269.59619407771254" y2="187.59619407771257" stroke="#fff" stroke-width="2.6" stroke-linecap="round"/>
<line x1="265.0" y1="184.5" x2="265.0" y2="189.5" stroke="#fff" stroke-width="2.6" stroke-linecap="round"/>
<line x1="263.93933982822017" y1="184.06066017177983" x2="260.40380592228746" y2="187.59619407771257" stroke="#fff" stroke-width="2.6" stroke-linecap="round"/>
<line x1="263.5" y1="183.0" x2="258.5" y2="183.0" stroke="#fff" stroke-width="2.6" stroke-linecap="round"/>
<line x1="263.93933982822017" y1="181.93933982822017" x2="260.40380592228746" y2="178.40380592228743" stroke="#fff" stroke-width="2.6" stroke-linecap="round"/>
<line x1="265.0" y1="181.5" x2="265.0" y2="176.5" stroke="#fff" stroke-width="2.6" stroke-linecap="round"/>
<line x1="266.06066017177983" y1="181.93933982822017" x2="269.59619407771254" y2="178.40380592228743" stroke="#fff" stroke-width="2.6" stroke-linecap="round"/>
<rect x="299" y="156" width="37" height="22" rx="3" fill="#6a9ad0" stroke="#2f4f6f" stroke-width="1.8" />
<line x1="305" y1="149" x2="305" y2="156" stroke="#2f4f6f" stroke-width="1.5" />
<line x1="305" y1="178" x2="305" y2="185" stroke="#2f4f6f" stroke-width="1.5" />
<line x1="310" y1="149" x2="310" y2="156" stroke="#2f4f6f" stroke-width="1.5" />
<line x1="310" y1="178" x2="310" y2="185" stroke="#2f4f6f" stroke-width="1.5" />
<line x1="315" y1="149" x2="315" y2="156" stroke="#2f4f6f" stroke-width="1.5" />
<line x1="315" y1="178" x2="315" y2="185" stroke="#2f4f6f" stroke-width="1.5" />
<line x1="320" y1="149" x2="320" y2="156" stroke="#2f4f6f" stroke-width="1.5" />
<line x1="320" y1="178" x2="320" y2="185" stroke="#2f4f6f" stroke-width="1.5" />
<line x1="325" y1="149" x2="325" y2="156" stroke="#2f4f6f" stroke-width="1.5" />
<line x1="325" y1="178" x2="325" y2="185" stroke="#2f4f6f" stroke-width="1.5" />
<line x1="330" y1="149" x2="330" y2="156" stroke="#2f4f6f" stroke-width="1.5" />
<line x1="330" y1="178" x2="330" y2="185" stroke="#2f4f6f" stroke-width="1.5" />
<rect x="322" y="174" width="18" height="18" rx="3" fill="#c9a00e" />
<line x1="332.5" y1="183.0" x2="337.5" y2="183.0" stroke="#fff" stroke-width="2.6" stroke-linecap="round"/>
<line x1="332.06066017177983" y1="184.06066017177983" x2="335.59619407771254" y2="187.59619407771257" stroke="#fff" stroke-width="2.6" stroke-linecap="round"/>
<line x1="331.0" y1="184.5" x2="331.0" y2="189.5" stroke="#fff" stroke-width="2.6" stroke-linecap="round"/>
<line x1="329.93933982822017" y1="184.06066017177983" x2="326.40380592228746" y2="187.59619407771257" stroke="#fff" stroke-width="2.6" stroke-linecap="round"/>
<line x1="329.5" y1="183.0" x2="324.5" y2="183.0" stroke="#fff" stroke-width="2.6" stroke-linecap="round"/>
<line x1="329.93933982822017" y1="181.93933982822017" x2="326.40380592228746" y2="178.40380592228743" stroke="#fff" stroke-width="2.6" stroke-linecap="round"/>
<line x1="331.0" y1="181.5" x2="331.0" y2="176.5" stroke="#fff" stroke-width="2.6" stroke-linecap="round"/>
<line x1="332.06066017177983" y1="181.93933982822017" x2="335.59619407771254" y2="178.40380592228743" stroke="#fff" stroke-width="2.6" stroke-linecap="round"/>
<rect x="360.5" y="146.5" width="43" height="43" rx="0" fill="#6a9ad0" stroke="#2f4f6f" stroke-width="2" />
<path d="M360 167 H404 M382 146 V190 M360 178 H382 M371 167 V190 M361 147 L382 167 M382 147 L361 167 M404 147 L383 166" fill="none" stroke="#2f4f6f" stroke-width="1.8" />
<rect x="362" y="148" width="19" height="18" rx="0" fill="#a8c4e6" />
<rect x="388" y="174" width="18" height="18" rx="3" fill="#c9a00e" />
<line x1="398.5" y1="183.0" x2="403.5" y2="183.0" stroke="#fff" stroke-width="2.6" stroke-linecap="round"/>
<line x1="398.06066017177983" y1="184.06066017177983" x2="401.59619407771254" y2="187.59619407771257" stroke="#fff" stroke-width="2.6" stroke-linecap="round"/>
<line x1="397.0" y1="184.5" x2="397.0" y2="189.5" stroke="#fff" stroke-width="2.6" stroke-linecap="round"/>
<line x1="395.93933982822017" y1="184.06066017177983" x2="392.40380592228746" y2="187.59619407771257" stroke="#fff" stroke-width="2.6" stroke-linecap="round"/>
<line x1="395.5" y1="183.0" x2="390.5" y2="183.0" stroke="#fff" stroke-width="2.6" stroke-linecap="round"/>
<line x1="395.93933982822017" y1="181.93933982822017" x2="392.40380592228746" y2="178.40380592228743" stroke="#fff" stroke-width="2.6" stroke-linecap="round"/>
<line x1="397.0" y1="181.5" x2="397.0" y2="176.5" stroke="#fff" stroke-width="2.6" stroke-linecap="round"/>
<line x1="398.06066017177983" y1="181.93933982822017" x2="401.59619407771254" y2="178.40380592228743" stroke="#fff" stroke-width="2.6" stroke-linecap="round"/>
<rect x="426.5" y="146.5" width="43" height="43" rx="4" fill="#c4d6ec" stroke="#3e5f87" stroke-width="1.5" />
<path d="M428 148 L443 182 L457 148" fill="none" stroke="#2f4f6f" stroke-width="2.5" />
<circle cx="443" cy="182" r="4" fill="#fff" stroke="#2f4f6f" stroke-width="2"/>
<rect x="454" y="174" width="18" height="18" rx="3" fill="#c9a00e" />
<line x1="464.5" y1="183.0" x2="469.5" y2="183.0" stroke="#fff" stroke-width="2.6" stroke-linecap="round"/>
<line x1="464.06066017177983" y1="184.06066017177983" x2="467.59619407771254" y2="187.59619407771257" stroke="#fff" stroke-width="2.6" stroke-linecap="round"/>
<line x1="463.0" y1="184.5" x2="463.0" y2="189.5" stroke="#fff" stroke-width="2.6" stroke-linecap="round"/>
<line x1="461.93933982822017" y1="184.06066017177983" x2="458.40380592228746" y2="187.59619407771257" stroke="#fff" stroke-width="2.6" stroke-linecap="round"/>
<line x1="461.5" y1="183.0" x2="456.5" y2="183.0" stroke="#fff" stroke-width="2.6" stroke-linecap="round"/>
<line x1="461.93933982822017" y1="181.93933982822017" x2="458.40380592228746" y2="178.40380592228743" stroke="#fff" stroke-width="2.6" stroke-linecap="round"/>
<line x1="463.0" y1="181.5" x2="463.0" y2="176.5" stroke="#fff" stroke-width="2.6" stroke-linecap="round"/>
<line x1="464.06066017177983" y1="181.93933982822017" x2="467.59619407771254" y2="178.40380592228743" stroke="#fff" stroke-width="2.6" stroke-linecap="round"/>
<path d="M527 188 L541 150 L549 153 L535 191 Z" fill="#dcdad6" stroke="#cfccc8" stroke-width="1" />
<path d="M536 190 L551 149 L560 152 L545 192 Z" fill="#e4e2de" stroke="#d0cdc8" stroke-width="1" />
<path d="M563.0 188.0 L573.0 188.0 L568 194.0 Z" fill="#555" />
<path d="M597 191 L599 178 L618 145 L627 150 L608 183 Z" fill="#e2cc24" stroke="#6a5a10" stroke-width="1.3" />
<path d="M597 191 L599 178 L608 183 Z" fill="#dcdcdc" stroke="#333" stroke-width="1" />
<path d="M618 145 L627 150 L629 146 L620 141 Z" fill="#f2f2f2" stroke="#777" stroke-width="1" />
<rect x="656.5" y="146.5" width="40" height="38" rx="4" fill="#dcdcdc" stroke="#cfcfcf" stroke-width="1.5" />
<rect x="664" y="149" width="24" height="13" rx="0" fill="#f0f0f0" />
<rect x="667" y="170" width="18" height="14" rx="0" fill="#efefef" />
<path d="M681 190 L695 160 L700 163 L686 193 Z" fill="#dedbd7" stroke="#d0cdc8" stroke-width="1" />
<rect x="725" y="178" width="7" height="7" rx="0" fill="none" stroke="#d4d4d4" stroke-width="1.5" />
<rect x="757" y="149" width="7" height="7" rx="0" fill="none" stroke="#d4d4d4" stroke-width="1.5" />
<line x1="732" y1="178" x2="757" y2="156" stroke="#dcdcdc" stroke-width="2" stroke-dasharray="4 3"/>
<path d="M781.0 164.0 L795.0 164.0 L788 172.0 Z" fill="#555" />
<path d="M814 158 C812 146 832 146 842 152 C852 152 857 153 855 162 C853 168 848 170 840 167 C830 164 820 172 816 166 Z" fill="#e2e4e2" stroke="#cfd1cf" stroke-width="1.5" />
<rect x="836" y="170" width="22" height="22" rx="4" fill="#d8d6d0" />
<circle cx="847" cy="181" r="5" fill="#fff"/>
<rect x="881" y="151" width="11" height="11" rx="0" fill="none" stroke="#cfcfcf" stroke-width="1.5" />
<line x1="893" y1="156" x2="917" y2="156" stroke="#d4d4d4" stroke-width="1.5" />
<line x1="886" y1="162" x2="880" y2="188" stroke="#d4d4d4" stroke-width="1.5" />
<path d="M895 168 L910 185 M905 166 L918 180 M912 170 L900 187" fill="none" stroke="#d4d2cc" stroke-width="4" />
<path d="M936.0 164.0 L950.0 164.0 L943 172.0 Z" fill="#555" />
<rect x="970" y="148" width="40" height="10" rx="0" fill="#e0ded4" stroke="#d8d6cc" stroke-width="1" />
<rect x="970" y="161" width="40" height="10" rx="0" fill="#e0ded4" stroke="#d8d6cc" stroke-width="1" />
<rect x="970" y="174" width="40" height="10" rx="0" fill="#e0ded4" stroke="#d8d6cc" stroke-width="1" />
<path d="M982 190 L1002 150 L1010 154 L990 192 Z" fill="#e6e4e0" stroke="#d4d2cc" stroke-width="1" />
<rect x="1036" y="148" width="28" height="26" rx="0" fill="#e4e4dc" stroke="#d8d8d0" stroke-width="1" />
<path d="M1040 160 H1072 L1070 190 H1042 Z" fill="#e8dcdc" stroke="#d4c4c4" stroke-width="2" />
<line x1="1040" y1="155" x2="1072" y2="155" stroke="#d8c8c8" stroke-width="3" />
<path d="M1100 154 L1130 172 M1101 166 L1130 160" fill="none" stroke="#d8d8d8" stroke-width="2.5" />
<circle cx="1138" cy="158" r="5" fill="none" stroke="#cfc0c0" stroke-width="2"/><circle cx="1138" cy="177" r="5" fill="none" stroke="#cfc0c0" stroke-width="2"/>
<path d="M1180 149 H1197 L1204 156 V179 H1180 Z" fill="#f4f4f4" stroke="#dadada" stroke-width="1.5" />
<path d="M1172 156 H1189 L1196 163 V188 H1172 Z" fill="#f6f6f6" stroke="#c4c4c4" stroke-width="1.5" />
<line x1="1176" y1="168" x2="1190" y2="168" stroke="#cfcfcf" stroke-width="1.2" />
<line x1="1176" y1="173" x2="1190" y2="173" stroke="#cfcfcf" stroke-width="1.2" />
<line x1="1176" y1="178" x2="1190" y2="178" stroke="#cfcfcf" stroke-width="1.2" />
<line x1="1176" y1="183" x2="1190" y2="183" stroke="#cfcfcf" stroke-width="1.2" />
<rect x="1238" y="148" width="32" height="40" rx="0" fill="#ececec" stroke="#d0d0d0" stroke-width="2" />
<rect x="1246" y="146" width="16" height="6" rx="0" fill="#e6e6e6" stroke="#d0d0d0" stroke-width="1" />
<path d="M1242 155 H1259 L1266 162 V186 H1242 Z" fill="#f6f6f6" stroke="#c8c8c8" stroke-width="1.5" />
<line x1="1246" y1="167" x2="1262" y2="167" stroke="#cfcfcf" stroke-width="1.2" />
<line x1="1246" y1="172" x2="1262" y2="172" stroke="#cfcfcf" stroke-width="1.2" />
<line x1="1246" y1="177" x2="1262" y2="177" stroke="#cfcfcf" stroke-width="1.2" />
<line x1="1246" y1="182" x2="1262" y2="182" stroke="#cfcfcf" stroke-width="1.2" />
<path d="M1302 168 L1313 150 V160 C1330 158 1342 168 1336 180 C1333 186 1326 188 1320 187 V181 C1326 181 1329 178 1328 174 C1327 170 1320 168 1313 169 V178 Z" fill="#dcd6d2" stroke="#cfc8c4" stroke-width="1" />
<path d="M1404 168 L1393 150 V160 C1376 158 1364 168 1370 180 C1373 186 1380 188 1386 187 V181 C1380 181 1377 178 1378 174 C1379 170 1386 168 1393 169 V178 Z" fill="#dde0dd" stroke="#cfd2cf" stroke-width="1" />
<path d="M1461 162.5 L1468 152.5 H1501.5 V172.5 H1468 Z" fill="#f8e353" stroke="#c9a10c" stroke-width="1.6" />
<text x="1485" y="169" font-family="Liberation Sans" font-size="16" font-weight="bold" fill="#222" text-anchor="middle" textLength="26" lengthAdjust="spacingAndGlyphs" >abc</text>
<path d="M1559 162 L1564 168 L1559 174 M1566 162 L1571 168 L1566 174" fill="none" stroke="#333" stroke-width="2" />
<circle cx="1640" cy="165" r="23" fill="#b8c4d0" stroke="#4a7ac8" stroke-width="1.6"/>
<path d="M1619 158 H1661 M1617 165 H1663 M1619 172 H1661" fill="none" stroke="#5a8ad6" stroke-width="1.2" />
<path d="M1624 149 C1620 156 1620 174 1624 181 M1656 149 C1660 156 1660 174 1656 181" fill="none" stroke="#777" stroke-width="1.2" />
<path d="M1631 143 C1626 152 1626 178 1631 187 L1640 187 L1640 143 Z" fill="#6a6a6a" />
<path d="M1649 143 C1654 152 1654 178 1649 187 L1640 187 L1640 143 Z" fill="#8a8a8a" />
<ellipse cx="1640" cy="165" rx="9" ry="22" fill="#5a9ae6" stroke="#3a6fb8" stroke-width="1"/>
<ellipse cx="1640" cy="160" rx="5" ry="12" fill="#9ac4f4" opacity="0.8"/>
<path d="M1617 165 H1663" fill="none" stroke="#3a6fb8" stroke-width="1.2" />
<rect x="1646" y="174" width="18" height="18" rx="2" fill="#4a8f4a" />
<path d="M1648.5 183.0 H1661.5 M1655.0 176.5 V189.5" fill="none" stroke="#fff" stroke-width="2.2" />
<path d="M1658.0 189.5 L1666.0 189.5 L1662 194.5 Z" fill="#222" />
<path d="M1684 162 L1689 168 L1684 174 M1691 162 L1696 168 L1691 174" fill="none" stroke="#333" stroke-width="2" />
<path d="M1764 148 C1754 148 1754 152 1754 157 V162 H1765 V164 H1749 C1744 164 1744 170 1744 175 C1744 181 1747 184 1752 184 H1756 V177 C1756 172 1760 169 1765 169 H1775 C1779 169 1782 166 1782 162 V157 C1782 152 1778 148 1770 148 Z" fill="#3f7ab4" />
<path d="M1766 188 C1776 188 1776 184 1776 179 V174 H1765 V172 H1781 C1786 172 1786 166 1786 161 C1786 155 1783 152 1778 152 H1774 V159 C1774 164 1770 167 1765 167 H1755 C1751 167 1748 170 1748 174 V179 C1748 184 1752 188 1760 188 Z" fill="#fcd53a" />
<circle cx="1760" cy="153" r="1.8" fill="#fff"/><circle cx="1771" cy="183" r="1.8" fill="#fff"/>
<path d="M1770 178 L1782 183 L1770 188" fill="none" stroke="#333" stroke-width="2" />
<path d="M1808 162 L1813 168 L1808 174 M1815 162 L1820 168 L1815 174" fill="none" stroke="#333" stroke-width="2" />
<rect x="1868" y="146" width="40" height="42" rx="0" fill="#6a9ad0" stroke="#1a1a1a" stroke-width="2" />
<rect x="1868" y="146" width="10" height="42" rx="0" fill="#2a3a4a" />
<text x="1893" y="180" font-family="Liberation Serif" font-size="28" font-weight="normal" fill="#fff" text-anchor="middle" >?</text>
<linearGradient id="gs" x1="0" y1="0" x2="0" y2="1"><stop offset="0" stop-color="#5e9e3e"/><stop offset="1" stop-color="#8ed06e"/></linearGradient>
<rect x="28" y="222" width="48" height="48" rx="0" fill="url(#gs)" />
<path d="M28 270 L76 222 V270 Z" fill="#8ccc6c" opacity="0.35"/>
<line x1="45" y1="253" x2="34" y2="264" stroke="#eef2fa" stroke-width="5.5" stroke-linecap="round"/>
<circle cx="56" cy="241.5" r="13" fill="#7ab55a" stroke="#f4f6fc" stroke-width="4.5"/>
<rect x="94" y="222" width="41" height="48" rx="0" fill="#fcd24c" />
<rect x="104" y="222" width="12" height="48" rx="0" fill="#fde7a0" opacity="0.8"/>
<rect x="94" y="222" width="6" height="40" rx="0" fill="#8a1040" />
<rect x="95" y="238" width="8" height="17" rx="0" fill="#c07090" />
<path d="M95 226 L112 226 L105 232 L95 234 Z" fill="#5cc85c" />
<rect x="104" y="241" width="6" height="9" rx="0" fill="#2a7080" />
<path d="M117 222 C114 232 122 238 126 246 C130 254 126 262 132 270" fill="none" stroke="#3a78d8" stroke-width="4" />
<path d="M94 262 C102 258 110 266 120 262 C126 260 130 266 135 264" fill="none" stroke="#3a78d8" stroke-width="3.5" />
<path d="M94 250 C100 252 104 248 110 254" fill="none" stroke="#ffffff" stroke-width="1.2" />
<line x1="116" y1="251" x2="139" y2="227" stroke="#6a3010" stroke-width="7" stroke-linecap="round"/>
<line x1="116" y1="251" x2="139" y2="227" stroke="#a0521e" stroke-width="4.5" stroke-linecap="round"/>
<path d="M112 256 L114 249 L119 254 Z" fill="#333" />
<circle cx="216" cy="246" r="24" fill="#0e4e6e"/>
<rect x="203" y="229" width="26" height="30" rx="5" fill="#fff" />
<rect x="206" y="234" width="20" height="12" rx="2" fill="#0e4e6e" />
<rect x="210" y="231" width="12" height="2" rx="0" fill="#0e4e6e" />
<circle cx="208" cy="252" r="2.5" fill="#0e4e6e"/><circle cx="224" cy="252" r="2.5" fill="#0e4e6e"/>
<rect x="205" y="258" width="5" height="5" rx="0" fill="#fff" />
<rect x="222" y="258" width="5" height="5" rx="0" fill="#fff" />
<path d="M293 227 H301 V236 M318 227 H328 V238 M302 262 H318 V256" fill="none" stroke="#e07070" stroke-width="1" />
<path d="M290 238 H338 M305 238 V256 H325 V238" fill="none" stroke="#70a0e0" stroke-width="1" />
<text x="314" y="255" font-family="Liberation Sans" font-size="21" font-weight="bold" fill="#3e4858" text-anchor="middle" textLength="48" lengthAdjust="spacingAndGlyphs" >GTFS</text>
<rect x="391.5" y="224.5" width="42" height="39" rx="0" fill="#e6e6e6" stroke="#333" stroke-width="1.8" stroke-dasharray="3.5 2.5"/>
<rect x="392" y="226" width="27" height="27" rx="0" fill="#fde44a" stroke="#c9a20a" stroke-width="1.8" />
<path d="M409 238 L409 264 L415 258 L421 268 L425 266 L420 256 L428 256 Z" fill="#fff" stroke="#111" stroke-width="1.6" />
<path d="M448.0 242.0 L462.0 242.0 L455 250.0 Z" fill="#555" />
<rect x="494" y="243" width="28" height="24" rx="0" fill="#fde44a" stroke="#c9a20a" stroke-width="2" />
<rect x="484.5" y="228.5" width="26" height="26" rx="0" fill="#d6d6d6" stroke="#8a8a8a" stroke-width="2" />
<rect x="489" y="233" width="18" height="6" rx="0" fill="#f4f4f4" stroke="#8a8a8a" stroke-width="1.2" />
<rect x="489" y="243" width="18" height="6" rx="0" fill="#f4f4f4" stroke="#8a8a8a" stroke-width="1.2" />
<path d="M539.0 242.0 L553.0 242.0 L546 250.0 Z" fill="#555" />
<rect x="573" y="227" width="26" height="26" rx="0" fill="#fde44a" stroke="#c9a20a" stroke-width="2" />
<rect x="581" y="235" width="26" height="26" rx="0" fill="#fde44a" stroke="#c9a20a" stroke-width="2" />
<rect x="596" y="249" width="21" height="21" rx="4" fill="#d62020" stroke="#a01010" stroke-width="1" />
<circle cx="606.5" cy="259.5" r="6" fill="none" stroke="#fff" stroke-width="2"/>
<line x1="602" y1="264" x2="611" y2="255" stroke="#fff" stroke-width="2" />
<path d="M629.0 242.0 L643.0 242.0 L636 250.0 Z" fill="#555" />
<rect x="662" y="227" width="28" height="28" rx="0" fill="#fde44a" stroke="#c9a20a" stroke-width="2" />
<path d="M698 266 C694 258 690 254 690 249 C690 244 694 241 698 241 C702 241 706 244 706 249 C706 254 702 258 698 266 Z" fill="#6a8aaa" stroke="#4a6a8a" stroke-width="1" />
<circle cx="698" cy="249" r="2.5" fill="#fff"/>
<path d="M0 0 H2.5 C2 1.2 1.2 2 0 2.5 Z" fill="#2a0a50"/>
<path d="M0 1258 C1.5 1259.5 3 1261 4.5 1262 H0 Z" fill="#1a0630"/>
<path d="M1960 1252 C1958.5 1256.5 1955.5 1259.8 1951 1262 H1960 Z" fill="#4a0a66"/>
<rect x="1956" y="1240" width="2" height="2" rx="0" fill="#a4a4a4" />
<rect x="1950" y="1246" width="2" height="2" rx="0" fill="#a4a4a4" />
<rect x="1956" y="1246" width="2" height="2" rx="0" fill="#a4a4a4" />
<rect x="1944" y="1252" width="2" height="2" rx="0" fill="#a4a4a4" />
<rect x="1950" y="1252" width="2" height="2" rx="0" fill="#a4a4a4" />
<rect x="1956" y="1252" width="2" height="2" rx="0" fill="#a4a4a4" />
<rect x="1938" y="1258" width="2" height="2" rx="0" fill="#a4a4a4" />
<rect x="1944" y="1258" width="2" height="2" rx="0" fill="#a4a4a4" />
<rect x="1950" y="1258" width="2" height="2" rx="0" fill="#a4a4a4" />
</svg></body></html>
